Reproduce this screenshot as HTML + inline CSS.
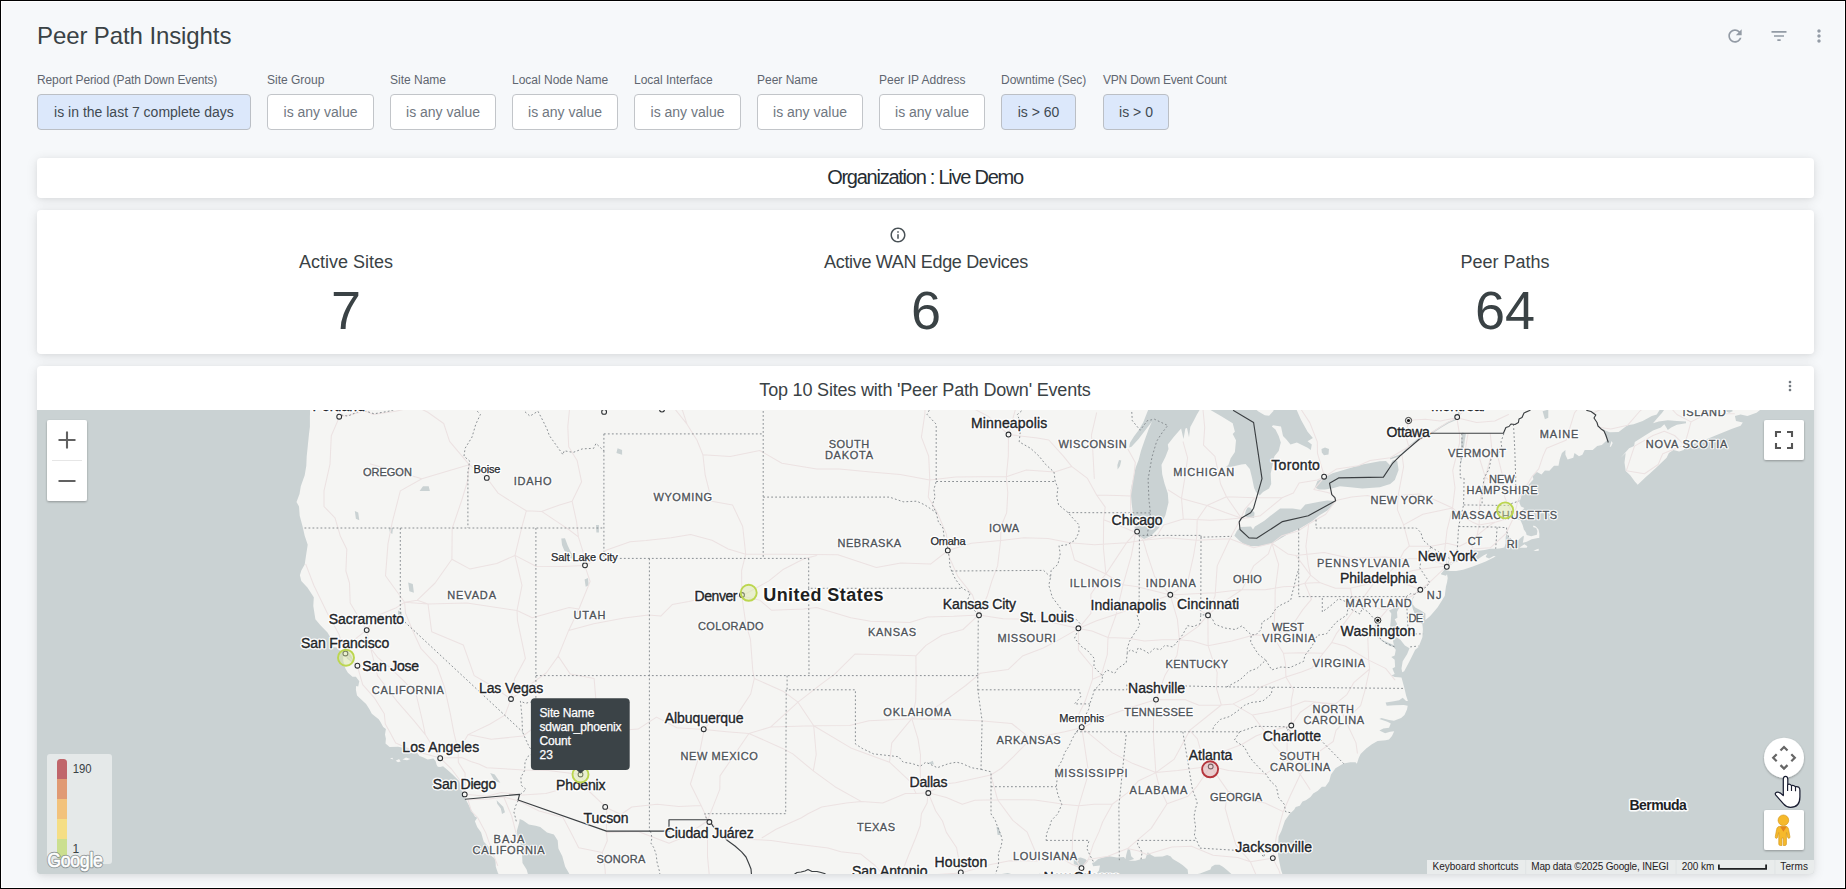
<!DOCTYPE html>
<html lang="en">
<head>
<meta charset="utf-8">
<title>Peer Path Insights</title>
<style>
html,body{margin:0;padding:0;}
html{background:#fff;}
body{width:1846px;height:889px;overflow:hidden;background:#000;font-family:"Liberation Sans",sans-serif;position:relative;}
#frame{position:absolute;left:1px;top:1px;width:1842px;height:885px;border:1px solid #fff;background:#f6f8fa;overflow:hidden;}
#page{position:absolute;left:-2px;top:-2px;width:1846px;height:889px;}
.abs{position:absolute;white-space:nowrap;}
#title{left:37px;top:21px;font-size:24px;line-height:30px;color:#3a4245;letter-spacing:-0.1px;}
.flabel{top:72px;font-size:12px;line-height:16px;color:#5f6670;}
.chip{top:94px;height:34px;line-height:34px;border:1px solid #c2c5c9;border-radius:4px;background:#fff;color:#707781;font-size:14px;text-align:center;box-sizing:content-box;}
.chip.on{background:#dce8fb;border-color:#bbbfc5;color:#414a52;}
.card{position:absolute;left:37px;width:1777px;background:#fff;border-radius:4px;box-shadow:0 2px 12px rgba(0,0,0,.11),0 1px 4px rgba(0,0,0,.04);}
.kl{font-size:18px;line-height:24px;color:#3a4245;text-align:center;width:400px;}
.kv{font-size:54px;line-height:60px;color:#3a4245;text-align:center;width:400px;}
svg{display:block;}
.ic{position:absolute;}
</style>
</head>
<body>
<div id="frame"><div id="page">

<div id="title" class="abs">Peer Path Insights</div>
<svg class="ic" style="left:1725px;top:26px" width="20" height="20" viewBox="0 0 24 24"><path fill="#939ba5" d="M17.65 6.35C16.2 4.9 14.21 4 12 4c-4.42 0-7.99 3.58-7.99 8s3.57 8 7.99 8c3.73 0 6.84-2.55 7.73-6h-2.08c-.82 2.33-3.04 4-5.65 4-3.31 0-6-2.69-6-6s2.69-6 6-6c1.66 0 3.14.69 4.22 1.78L13 11h7V4l-2.35 2.35z"/></svg>
<svg class="ic" style="left:1769px;top:26px" width="20" height="20" viewBox="0 0 24 24"><path fill="#939ba5" d="M10 18h4v-2h-4v2zM3 6v2h18V6H3zm3 7h12v-2H6v2z"/></svg>
<svg class="ic" style="left:1809px;top:26px" width="20" height="20" viewBox="0 0 24 24"><path fill="#939ba5" d="M12 8c1.1 0 2-.9 2-2s-.9-2-2-2-2 .9-2 2 .9 2 2 2zm0 2c-1.100 0-2 .9-2 2s.9 2 2 2 2-.9 2-2-.9-2-2-2zm0 6c-1.100 0-2 .9-2 2s.9 2 2 2 2-.9 2-2-.9-2-2-2z"/></svg>

<!-- filters -->
<div class="abs flabel" style="left:37px;letter-spacing:-0.12px">Report Period (Path Down Events)</div>
<div class="abs chip on" style="left:37px;width:212px">is in the last 7 complete days</div>
<div class="abs flabel" style="left:267px">Site Group</div>
<div class="abs chip" style="left:267px;width:105px">is any value</div>
<div class="abs flabel" style="left:390px">Site Name</div>
<div class="abs chip" style="left:390px;width:104px">is any value</div>
<div class="abs flabel" style="left:512px">Local Node Name</div>
<div class="abs chip" style="left:512px;width:104px">is any value</div>
<div class="abs flabel" style="left:634px">Local Interface</div>
<div class="abs chip" style="left:634px;width:105px">is any value</div>
<div class="abs flabel" style="left:757px">Peer Name</div>
<div class="abs chip" style="left:757px;width:104px">is any value</div>
<div class="abs flabel" style="left:879px">Peer IP Address</div>
<div class="abs chip" style="left:879px;width:104px">is any value</div>
<div class="abs flabel" style="left:1001px">Downtime (Sec)</div>
<div class="abs chip on" style="left:1001px;width:73px">is &gt; 60</div>
<div class="abs flabel" style="left:1103px;letter-spacing:-0.22px">VPN Down Event Count</div>
<div class="abs chip on" style="left:1103px;width:64px">is &gt; 0</div>

<!-- org card -->
<div class="card" style="top:158px;height:40px"></div>
<div id="org" class="abs" style="left:625px;width:600px;top:164px;text-align:center;font-size:20px;line-height:26px;color:#262d33;letter-spacing:-1.25px">Organization : Live Demo</div>

<!-- KPI card -->
<div class="card" style="top:210px;height:144px"></div>
<svg class="ic" style="left:889px;top:226px" width="18" height="18" viewBox="0 0 24 24"><path fill="#4a5257" d="M11 17h2v-6h-2v6zm1-15C6.480 2 2 6.480 2 12s4.480 10 10 10 10-4.480 10-10S17.520 2 12 2zm0 18c-4.410 0-8-3.590-8-8s3.590-8 8-8 8 3.590 8 8-3.590 8-8 8zM11 9h2V7h-2v2z"/></svg>
<div class="abs kl" style="left:146px;top:250px">Active Sites</div>
<div class="abs kv" style="left:146px;top:280px">7</div>
<div class="abs kl" style="left:726px;top:250px;letter-spacing:-0.33px">Active WAN Edge Devices</div>
<div class="abs kv" style="left:726px;top:280px">6</div>
<div class="abs kl" style="left:1305px;top:250px">Peer Paths</div>
<div class="abs kv" style="left:1305px;top:280px">64</div>

<!-- map card -->
<div class="card" style="top:366px;height:508px;overflow:hidden">
<div id="maptitle" class="abs" style="left:588px;width:600px;top:12px;text-align:center;font-size:18px;line-height:24px;color:#3a4245;letter-spacing:-0.19px">Top 10 Sites with 'Peer Path Down' Events</div>
<svg class="ic" style="left:1745px;top:12px" width="16" height="16" viewBox="0 0 24 24"><path fill="#70777e" d="M12 8c1.1 0 2-.9 2-2s-.9-2-2-2-2 .9-2 2 .9 2 2 2zm0 2c-1.100 0-2 .9-2 2s.9 2 2 2 2-.9 2-2-.9-2-2-2zm0 6c-1.100 0-2 .9-2 2s.9 2 2 2 2-.9 2-2-.9-2-2-2z"/></svg>
<div id="map" style="position:absolute;left:0;top:44px;width:1777px;height:464px;background:#cad2d3;overflow:hidden">
<svg width="1777" height="464" viewBox="37 410 1777 464" style="position:absolute;left:0;top:0;font-family:'Liberation Sans',sans-serif">
<rect x="37" y="410" width="1777" height="464" fill="#cad2d3"/>
<path fill="#f5f5f3" d="M308.1 381.6 L308.1 393.2 L310.2 404.7 L309.9 417.7 L309.9 426.8 L309.0 433.9 L307.7 446.7 L306.7 456.3 L306.3 465.8 L304.7 475.2 L300.8 486.2 L299.5 494.0 L296.5 502.1 L299.0 506.5 L299.7 515.7 L302.6 526.5 L304.7 535.7 L307.7 544.8 L305.8 556.9 L304.7 564.4 L301.3 570.4 L299.9 575.2 L301.3 580.9 L307.4 587.4 L313.8 597.2 L313.3 606.1 L315.4 619.3 L320.2 625.1 L327.5 632.4 L330.9 638.2 L333.1 642.6 L331.5 646.9 L336.6 647.5 L338.8 649.8 L342.7 652.1 L343.8 652.1 L344.5 648.3 L347.9 645.4 L349.1 644.0 L347.9 646.9 L347.9 651.2 L351.3 655.5 L353.6 661.3 L352.5 662.7 L346.8 658.4 L345.7 653.2 L343.4 652.7 L343.2 658.4 L343.4 661.3 L345.4 668.4 L347.9 672.7 L352.5 676.7 L355.9 676.7 L359.3 681.3 L358.2 686.4 L356.1 686.1 L355.9 689.8 L357.0 695.4 L366.1 703.9 L369.6 709.5 L371.8 713.7 L378.7 719.3 L380.5 722.1 L383.2 727.1 L385.9 729.1 L385.0 734.6 L385.9 738.8 L385.5 743.5 L389.6 747.1 L398.0 746.8 L407.1 748.4 L412.8 749.8 L416.9 752.6 L419.6 756.1 L423.0 757.2 L427.6 759.4 L433.3 758.6 L435.5 760.8 L436.7 764.9 L437.8 766.8 L440.1 767.1 L443.1 766.3 L448.1 770.4 L452.6 774.5 L459.4 781.3 L462.4 790.8 L463.1 795.7 L465.8 799.5 L470.4 808.3 L474.9 816.4 L477.2 817.7 L474.9 821.2 L477.2 827.1 L481.1 832.4 L483.8 841.7 L490.2 848.4 L490.2 855.0 L495.4 858.9 L495.8 866.8 L498.1 873.4 L509.5 882.5 L523.2 895.6 L545.9 895.6 L539.1 885.1 L528.8 877.3 L526.6 869.4 L522.5 862.9 L522.0 853.6 L520.4 843.1 L517.9 839.1 L516.8 831.1 L519.1 823.1 L519.7 819.1 L523.2 820.4 L528.8 824.4 L535.7 825.8 L540.2 827.1 L547.0 832.4 L553.9 834.6 L557.7 840.4 L558.4 848.4 L562.3 856.3 L565.2 866.8 L569.8 874.7 L575.5 885.1 L582.3 895.6 L741.6 918.9 L923.6 918.9 L937.3 908.5 L960.1 895.6 L966.9 890.4 L973.7 885.1 L982.8 878.6 L995.3 875.2 L1007.8 872.9 L1021.5 877.3 L1030.6 878.6 L1036.3 877.3 L1039.7 873.4 L1048.8 879.9 L1053.4 882.5 L1057.9 886.4 L1069.3 890.4 L1078.4 890.4 L1084.1 886.4 L1092.0 885.1 L1097.7 893.0 L1103.4 893.0 L1101.1 885.1 L1093.2 877.3 L1098.9 870.8 L1100.0 865.5 L1093.2 866.3 L1092.0 862.9 L1094.3 862.3 L1098.2 858.9 L1105.7 856.8 L1109.1 856.3 L1117.1 857.6 L1123.9 857.1 L1125.5 858.9 L1126.2 855.0 L1127.8 848.9 L1130.0 849.7 L1131.2 856.3 L1134.1 858.9 L1128.4 860.8 L1135.3 860.8 L1139.8 859.4 L1145.5 858.4 L1146.7 855.0 L1147.8 852.3 L1151.2 855.0 L1154.6 856.8 L1162.6 856.5 L1167.1 855.0 L1170.5 856.3 L1172.8 858.9 L1179.6 862.9 L1183.1 865.5 L1187.6 869.4 L1188.3 875.2 L1192.2 875.2 L1196.7 874.2 L1200.1 873.4 L1210.4 869.4 L1211.5 866.8 L1214.9 864.7 L1219.5 864.7 L1222.9 866.8 L1226.3 869.4 L1233.1 875.5 L1238.8 885.1 L1246.8 890.4 L1250.2 905.9 L1296.8 905.9 L1290.0 893.0 L1284.3 879.9 L1280.9 869.4 L1278.6 858.1 L1278.2 855.8 L1277.5 848.4 L1278.2 843.1 L1278.6 836.4 L1281.4 831.1 L1283.2 825.8 L1285.0 820.4 L1288.9 815.1 L1290.7 812.9 L1294.1 809.7 L1295.7 807.0 L1299.8 805.7 L1302.5 801.6 L1305.9 800.3 L1310.5 797.0 L1313.2 793.5 L1317.8 790.8 L1321.9 786.7 L1325.3 786.7 L1329.2 781.3 L1331.0 774.5 L1335.5 768.2 L1343.5 763.6 L1350.3 762.2 L1355.5 762.2 L1356.9 763.8 L1358.7 758.1 L1360.6 753.9 L1366.2 748.4 L1371.9 744.3 L1377.6 741.0 L1385.6 740.2 L1389.0 739.6 L1392.0 736.0 L1394.2 731.3 L1390.1 731.8 L1385.1 733.2 L1379.4 730.4 L1383.3 728.5 L1389.0 727.7 L1390.8 723.5 L1387.4 721.8 L1379.4 719.0 L1381.5 717.9 L1389.0 719.9 L1394.0 720.7 L1401.1 717.9 L1404.5 715.1 L1407.0 709.5 L1407.7 705.8 L1403.8 705.0 L1394.7 705.3 L1386.7 705.8 L1385.6 702.5 L1392.4 701.6 L1399.2 700.2 L1402.7 697.7 L1406.1 701.1 L1407.9 701.1 L1406.1 695.4 L1404.5 688.4 L1401.5 677.6 L1394.7 677.0 L1391.3 675.6 L1394.7 674.1 L1392.4 668.4 L1395.1 667.0 L1394.7 659.8 L1391.3 657.0 L1394.7 655.5 L1395.8 649.8 L1393.6 646.9 L1389.0 645.4 L1382.2 641.1 L1376.5 636.8 L1371.9 632.4 L1377.8 623.7 L1378.1 625.1 L1373.1 633.9 L1379.2 638.2 L1384.4 641.1 L1391.3 644.0 L1394.0 645.4 L1392.4 638.2 L1389.7 630.9 L1390.8 620.7 L1391.3 613.4 L1389.0 610.5 L1392.4 609.0 L1399.2 604.6 L1399.7 601.6 L1402.7 603.1 L1399.2 607.5 L1397.0 611.9 L1397.4 617.8 L1394.7 619.3 L1397.0 623.7 L1395.8 629.5 L1399.2 630.9 L1395.8 636.8 L1400.4 639.7 L1404.9 645.4 L1409.5 648.3 L1407.2 654.1 L1402.7 661.3 L1401.5 668.4 L1402.2 672.2 L1404.2 671.3 L1409.5 661.3 L1415.2 649.8 L1418.6 646.9 L1422.4 637.3 L1422.9 629.5 L1422.4 624.2 L1417.4 620.7 L1415.2 614.9 L1412.9 609.0 L1411.3 603.1 L1412.9 597.2 L1417.4 592.8 L1421.3 589.8 L1415.2 594.3 L1412.2 600.2 L1412.9 604.6 L1415.2 607.5 L1420.9 610.5 L1425.4 613.4 L1425.4 619.9 L1430.0 616.3 L1437.5 607.5 L1441.3 601.6 L1444.8 595.7 L1445.9 586.8 L1447.0 582.4 L1447.7 577.9 L1447.0 574.3 L1445.9 575.8 L1441.3 574.6 L1441.1 573.4 L1442.5 571.9 L1444.8 568.9 L1446.3 567.4 L1447.5 564.4 L1449.3 558.4 L1448.2 552.4 L1449.8 558.4 L1448.8 562.0 L1448.6 564.4 L1451.6 564.4 L1454.3 559.9 L1458.4 556.9 L1463.0 554.8 L1466.4 553.3 L1472.1 550.2 L1478.9 550.8 L1484.6 549.9 L1490.3 548.7 L1495.3 548.7 L1499.4 548.4 L1504.4 547.5 L1505.7 543.3 L1505.7 537.2 L1506.4 533.5 L1507.8 536.6 L1510.3 538.7 L1510.7 543.3 L1512.3 544.5 L1514.2 543.3 L1516.9 541.7 L1519.8 538.7 L1523.3 535.7 L1523.9 536.6 L1523.3 540.2 L1522.8 542.7 L1526.7 541.7 L1531.7 539.3 L1538.0 538.1 L1539.2 538.1 L1539.4 534.1 L1538.5 529.5 L1535.8 526.5 L1533.5 525.6 L1533.0 527.1 L1536.2 528.0 L1537.4 531.1 L1536.9 534.7 L1531.2 536.3 L1526.7 535.0 L1526.0 532.6 L1523.9 529.5 L1522.6 524.9 L1520.5 520.3 L1516.4 518.8 L1514.6 517.3 L1516.4 515.1 L1519.2 512.6 L1522.1 510.2 L1524.4 508.0 L1521.0 506.5 L1519.4 502.7 L1521.0 497.1 L1521.7 495.0 L1524.8 490.9 L1527.4 486.2 L1530.1 483.1 L1533.5 479.3 L1532.4 475.9 L1536.9 472.1 L1541.5 474.6 L1544.9 470.5 L1549.4 470.8 L1554.0 465.8 L1558.5 465.8 L1559.7 459.4 L1561.9 453.1 L1565.4 449.9 L1565.4 454.7 L1567.6 459.4 L1573.3 457.8 L1574.5 453.1 L1579.0 456.3 L1582.4 454.7 L1584.7 449.9 L1592.7 449.9 L1597.2 446.1 L1601.8 445.1 L1607.5 439.7 L1605.2 435.5 L1602.9 429.0 L1605.2 430.6 L1609.7 432.3 L1618.6 431.9 L1624.5 427.4 L1627.5 425.2 L1633.6 424.2 L1642.7 420.9 L1651.8 416.1 L1656.8 414.5 L1659.8 409.6 L1663.2 404.7 L1666.6 406.3 L1662.1 412.8 L1656.4 419.3 L1653.0 423.2 L1658.7 421.6 L1667.8 420.3 L1676.9 420.9 L1686.0 421.6 L1686.0 423.2 L1676.9 424.8 L1671.2 427.4 L1667.8 430.0 L1665.9 426.8 L1664.3 424.2 L1660.9 427.4 L1653.0 430.6 L1645.0 435.5 L1634.8 441.9 L1634.1 446.1 L1629.1 448.3 L1623.4 454.7 L1620.7 457.8 L1625.7 453.1 L1624.5 462.6 L1625.7 471.1 L1630.2 475.2 L1634.8 481.5 L1637.7 484.7 L1642.7 480.0 L1646.1 476.8 L1649.6 473.7 L1656.4 467.4 L1659.8 464.2 L1666.6 457.8 L1668.9 453.1 L1673.4 449.9 L1679.1 451.5 L1683.7 449.9 L1686.0 445.1 L1695.1 443.5 L1704.2 440.3 L1715.5 435.5 L1723.5 432.3 L1731.5 429.0 L1740.6 425.8 L1742.8 422.6 L1736.0 420.9 L1734.9 416.1 L1740.6 414.5 L1747.4 416.1 L1756.5 412.8 L1766.7 404.7 L1767.9 391.5 L1765.6 368.3 L172.7 368.3Z"/>
<path fill="#cad2d3" d="M1629.1 368.3 L1660.9 394.8 L1674.6 401.4 L1683.7 406.3 L1692.8 407.9 L1703.0 410.5 L1713.3 411.9 L1721.2 409.6 L1729.2 412.8 L1732.6 411.2 L1730.3 401.4 L1740.6 384.9 L1752.0 368.3Z M1148.9 408.0 L1143.3 422.3 L1138.6 430.2 L1133.9 436.5 L1130.0 442.8 L1129.2 447.5 L1131.5 446.7 L1138.6 438.9 L1144.1 431.8 L1148.9 425.5 L1152.0 421.5 L1148.9 428.6 L1144.9 439.6 L1141.0 450.7 L1138.6 460.1 L1135.5 468.0 L1133.1 479.0 L1130.7 490.0 L1131.5 502.6 L1133.1 515.2 L1134.7 527.8 L1138.6 535.7 L1144.1 538.9 L1151.2 535.7 L1159.1 527.8 L1165.4 515.2 L1168.5 502.6 L1167.8 493.2 L1164.6 483.7 L1162.2 474.3 L1161.5 464.8 L1165.4 457.0 L1168.5 449.1 L1167.8 444.4 L1174.1 436.5 L1181.1 428.6 L1183.5 438.9 L1185.4 428.6 L1187.0 428.0 L1189.0 437.3 L1190.3 427.0 L1193.7 420.7 L1196.9 414.4 L1200.8 408.0Z M1207.1 408.0 L1222.1 416.8 L1232.7 423.2 L1234.9 431.7 L1232.7 433.9 L1236.0 440.3 L1234.9 452.0 L1230.6 458.4 L1228.5 464.8 L1225.3 467.5 L1232.7 466.5 L1241.3 464.6 L1245.6 464.1 L1249.8 469.1 L1252.0 477.7 L1254.1 488.0 L1256.0 492.0 L1259.6 495.5 L1263.0 492.0 L1269.0 488.4 L1271.2 484.1 L1270.7 473.4 L1274.4 456.3 L1278.7 451.0 L1280.8 442.4 L1278.7 436.0 L1275.5 429.6 L1271.8 426.4 L1273.0 425.3 L1281.0 426.4 L1283.0 436.0 L1286.2 439.2 L1290.5 444.5 L1296.9 442.4 L1307.6 447.7 L1310.8 449.9 L1311.8 444.5 L1307.6 441.3 L1312.9 438.1 L1307.6 431.7 L1301.1 420.0 L1295.8 408.0Z M1247.8 507.3 L1250.2 507.7 L1254.5 512.8 L1254.1 518.0 L1247.0 517.6 L1244.7 515.2 L1245.9 510.5Z M1238.8 528.6 L1240.7 527.0 L1251.0 526.6 L1253.0 529.4 L1254.9 526.6 L1264.4 520.7 L1272.2 514.4 L1280.1 508.5 L1292.7 508.5 L1300.6 509.7 L1305.3 504.6 L1319.5 501.8 L1327.4 500.6 L1335.2 501.0 L1333.7 504.2 L1327.4 510.5 L1319.5 515.2 L1311.6 521.5 L1299.8 528.6 L1288.0 534.1 L1280.1 538.8 L1272.2 543.5 L1260.4 545.9 L1251.0 546.3 L1243.9 544.3 L1239.2 540.4 L1234.4 535.7 L1236.8 530.9Z M1314.9 487.4 L1317.4 480.9 L1323.5 477.9 L1332.6 473.3 L1347.8 468.8 L1362.3 464.5 L1379.8 461.2 L1386.0 461.0 L1389.8 464.9 L1393.0 460.0 L1397.3 461.2 L1398.6 469.9 L1394.8 479.9 L1390.2 484.0 L1379.8 487.2 L1362.3 488.5 L1347.8 487.0 L1339.9 486.2 L1332.6 488.2 L1324.9 489.5 L1319.0 489.5Z M561.3 538.6 L565.0 538.2 L567.5 545.0 L571.0 552.5 L574.0 556.0 L572.5 559.0 L568.0 556.0 L564.5 551.0 L562.0 545.0Z M1462.5 432.3 L1461.1 440.3 L1461.1 449.9 L1460.7 459.4 L1460.2 465.8 L1462.0 459.4 L1463.6 449.9 L1464.8 440.3 L1465.9 433.9Z M1080.7 857.6 L1073.8 858.9 L1073.8 864.2 L1079.5 866.0 L1084.1 865.5 L1087.9 861.6 L1085.2 858.9Z M398.0 610.5 L401.9 611.9 L401.4 619.3 L398.0 619.3Z M408.2 582.4 L412.8 583.9 L413.9 592.8 L409.4 591.3Z M490.2 773.1 L494.7 774.5 L500.4 782.7 L494.7 781.3Z M354.8 511.1 L358.2 512.6 L359.3 520.3 L355.9 518.8Z M388.9 528.0 L393.0 528.0 L392.3 534.1 L390.0 532.6Z M423.0 486.2 L428.7 486.2 L429.9 490.9 L419.6 490.9Z M584.6 579.4 L588.0 577.9 L588.7 585.3 L585.7 586.8Z M617.6 448.3 L622.1 449.9 L622.1 454.7 L616.4 453.1Z M596.0 524.9 L598.9 524.9 L598.9 532.6 L596.4 532.6Z M1542.6 411.2 L1548.3 409.6 L1548.3 417.7 L1544.9 419.3Z M1119.0 460.0 L1121.3 460.5 L1120.0 466.0 L1117.6 469.6 L1117.4 465.0Z M997.6 835.1 L996.5 827.1 L998.7 827.1 L1001.0 835.1Z M927.1 763.6 L932.8 760.8 L933.9 764.4Z M1321.5 449.0 L1325.0 447.5 L1329.0 449.0 L1328.5 454.5 L1324.0 455.2 L1321.8 452.5Z M496.6 800.3 L499.6 803.2 L503.2 806.8 L505.0 812.2 L502.0 814.0 L500.8 808.6 L497.2 803.8Z"/>
<path fill="none" stroke="#cad2d3" stroke-width="1.6" stroke-linejoin="round" d="M1390.1 458.8 L1401.5 454.7 L1408.8 446.7 L1420.9 437.1 L1430.4 433.9 L1440.2 427.4 L1448.2 422.6 L1456.1 419.3 L1459.5 411.2 L1465.2 401.4"/>
<path fill="#f5f5f3" d="M1446.3 570.4 L1450.4 571.0 L1456.1 571.0 L1463.0 569.8 L1472.1 566.8 L1480.0 563.8 L1485.7 561.4 L1493.7 557.5 L1495.7 556.3 L1493.7 556.0 L1489.1 558.4 L1485.7 556.9 L1487.3 553.6 L1483.4 555.4 L1477.7 559.3 L1467.5 559.6 L1460.7 560.5 L1457.3 561.4 L1452.7 562.9 L1451.6 564.4 L1449.3 565.0 L1447.0 567.4Z M1519.2 547.8 L1524.4 544.2 L1527.4 546.3 L1526.7 547.8Z M1533.5 550.8 L1536.9 549.3 L1538.7 548.7 L1538.7 550.8 L1535.8 551.1Z M1609.7 446.7 L1611.5 440.9 L1612.7 442.9 L1610.9 446.7Z M1254.0 408.0 L1258.4 411.4 L1264.8 415.2 L1269.1 415.7 L1273.4 410.9 L1274.0 408.0Z M390.0 758.6 L392.3 757.8 L393.4 759.4Z M395.7 760.8 L399.1 758.9 L400.7 761.4 L398.0 762.2Z M402.5 759.4 L406.0 757.5 L410.5 758.9 L407.1 760.3Z"/>
<path fill="none" stroke="#ece2e2" stroke-width="1.05" stroke-linejoin="round" stroke-linecap="round" d="M464.9 794.3 L460.6 781.3 L451.5 769.0 L440.3 758.1 L432.1 745.7 L425.3 734.6 L413.9 720.7 L396.9 701.1 L377.5 675.6 L370.7 648.3 L366.4 630.1 L350.2 603.1 L349.5 583.0 L345.9 571.0 L346.8 549.3 L340.4 536.3 L335.0 517.9 L324.0 506.5 L324.0 490.9 L330.0 464.2 L331.3 435.8 L339.3 417.1 L334.3 398.1 M425.3 734.6 L422.6 721.5 L416.2 694.6 L405.5 682.7 L389.3 667.0 L377.5 657.3 L370.7 648.3 M440.3 758.1 L425.3 753.9 L416.4 751.7 L407.1 747.9 L395.7 742.9 L390.5 733.2 L385.3 724.0 L384.3 713.7 L374.6 698.2 L362.7 684.7 L357.3 665.9 L345.2 653.5 L338.8 633.9 L327.5 613.4 L313.8 585.3 L305.8 564.4 M345.2 653.5 L349.1 644.0 L366.4 630.1 L378.7 614.9 L395.7 608.1 L404.6 602.2 L417.3 600.2 L435.1 583.0 L451.9 559.3 L469.7 568.9 L496.8 563.5 L515.0 555.4 L535.9 566.2 L561.8 566.5 L584.8 565.6 L596.0 559.9 L606.0 550.2 L630.1 541.7 L646.0 540.5 L671.1 537.8 L690.6 534.4 L712.0 540.2 L728.2 549.0 L745.7 554.2 L787.6 554.2 L837.9 554.8 L876.3 567.4 L900.9 562.9 L930.5 564.1 L948.0 550.5 L971.4 543.3 L1000.6 540.5 L1023.8 537.8 L1048.1 538.4 L1069.7 542.7 L1094.3 544.8 L1126.6 542.7 L1143.2 540.2 L1168.3 537.8 L1196.7 540.2 L1229.9 538.7 L1253.6 547.8 L1272.0 543.3 L1287.7 553.9 L1295.7 555.4 L1324.1 552.4 L1351.5 558.4 L1383.3 556.9 L1403.8 558.4 L1419.9 558.7 L1435.6 561.4 L1447.0 565.9 M464.9 794.3 L465.1 773.1 L458.3 762.2 L458.3 751.2 L468.1 734.6 L489.7 724.3 L504.9 715.1 L510.9 699.1 L534.5 681.3 L546.4 672.7 L558.2 656.1 L568.7 630.4 L578.9 609.0 L590.1 581.5 L584.8 565.6 L583.0 551.7 L578.4 536.9 L576.6 521.9 L572.1 501.2 L581.6 481.8 L577.1 460.4 L568.7 446.7 L567.8 426.8 L570.3 401.4 M339.3 417.1 L365.7 411.2 L373.4 414.5 L395.7 411.2 L416.2 406.6 L427.8 412.2 L443.7 423.5 L449.6 441.3 L469.4 464.8 L486.7 477.8 L498.1 493.1 L507.2 499.0 L526.3 510.8 L541.6 511.4 L557.3 521.9 L568.7 529.5 L578.4 536.9 M541.6 511.4 L559.6 504.9 L572.1 501.2 M510.9 699.1 L491.3 685.5 L474.2 675.6 L463.3 644.9 L431.7 631.8 L428.0 604.0 L417.3 600.2 M451.9 559.3 L452.2 528.3 L461.7 500.3 L467.4 481.5 L469.4 464.8 M510.9 699.1 L514.7 678.4 L525.4 658.4 L517.5 620.7 L517.0 610.5 L522.0 585.3 L515.0 555.4 L521.6 528.0 L526.3 510.8 M458.3 751.2 L453.7 731.8 L450.3 713.7 L444.4 686.9 L436.7 665.3 L420.8 648.3 L412.8 630.9 L405.5 613.1 L404.6 602.2 L385.5 575.8 L388.0 543.6 L392.3 522.2 L400.3 490.9 L421.9 478.7 M404.6 602.2 L428.0 604.0 L466.9 603.1 L517.0 610.5 L532.3 617.8 L569.1 607.5 L578.9 609.0 M370.5 463.9 L421.9 478.7 L463.1 466.4 L469.4 464.8 M440.3 758.1 L461.7 757.5 L470.8 761.4 L478.8 764.1 L486.7 767.7 L504.9 768.8 L523.2 770.1 L548.2 770.4 L580.7 774.5 L587.8 790.0 L606.7 807.8 L621.0 814.5 L631.7 807.0 L657.2 804.3 L678.8 806.5 L701.1 805.4 L707.7 820.1 L723.4 833.8 L745.5 839.3 L771.2 840.4 L789.8 843.3 L828.1 848.1 L840.8 851.8 L860.6 853.9 L875.0 865.5 L889.7 882.0 L912.3 878.6 L935.0 874.7 L960.7 873.1 L989.6 864.7 L1009.7 860.8 L1037.0 861.0 L1056.8 855.0 L1071.6 864.2 L1081.3 868.1 L1088.6 859.4 L1108.0 856.3 L1127.5 848.6 L1138.7 851.0 L1146.7 854.4 L1171.7 847.0 L1191.5 846.2 L1213.1 855.2 L1237.7 857.6 L1250.4 861.8 L1272.7 858.1 M464.9 794.3 L486.7 796.2 L501.3 792.4 L522.5 795.1 L545.9 793.5 L565.9 788.1 L587.8 790.0 M468.1 734.6 L491.3 739.3 L522.9 736.0 L535.7 726.5 L561.8 723.5 L590.3 726.3 L611.9 731.0 L638.1 729.1 L656.5 717.1 L676.8 727.7 L704.1 729.6 L726.6 731.8 L748.9 733.5 L770.5 727.1 L813.7 725.7 L849.7 725.4 L869.0 720.7 L911.8 718.7 L946.4 719.3 L982.8 721.0 L1011.7 723.5 L1030.8 738.8 L1064.7 731.8 L1081.8 727.7 L1110.0 714.8 L1133.0 706.7 L1156.2 699.4 L1185.3 699.7 L1199.0 705.3 L1221.3 705.0 L1233.1 703.9 L1252.5 715.1 L1271.8 711.5 L1290.0 706.7 L1305.0 701.1 L1315.3 701.9 L1333.2 705.3 L1341.4 710.1 L1346.9 723.5 L1356.0 742.9 L1357.4 753.1 M580.7 774.5 L580.0 751.2 L588.0 738.8 L590.3 726.3 L596.0 701.1 L594.1 678.4 L570.3 674.1 L558.2 656.1 M701.1 805.4 L690.4 784.0 L698.6 757.8 L704.1 729.6 L713.2 717.9 L720.2 712.6 L736.6 715.4 L750.7 694.0 L754.3 678.4 L752.8 670.7 L750.5 639.7 L745.7 622.8 L741.8 596.0 L741.6 570.7 L745.7 554.2 L742.7 526.5 L732.5 504.9 L711.8 501.2 L705.2 475.2 L702.9 454.7 L697.0 440.3 L687.0 424.2 L682.4 410.2 L668.8 401.4 M568.7 630.4 L593.7 623.7 L624.2 618.1 L648.3 614.9 L660.8 616.1 L672.2 604.6 L688.8 601.6 L700.6 598.7 L717.3 599.0 L730.2 596.6 L741.8 596.0 L759.8 600.2 L771.4 610.2 L803.7 609.0 L816.5 607.5 L850.8 617.8 L870.6 621.3 L909.8 622.5 L927.5 616.9 L953.7 616.3 L978.7 614.9 L1003.3 618.7 L1029.9 619.3 L1057.9 623.7 L1078.4 628.6 L1096.6 620.7 L1116.2 614.3 L1142.1 604.6 L1170.3 595.1 L1199.0 593.4 L1215.1 592.8 L1242.2 589.5 L1265.0 589.8 L1283.2 586.8 L1294.1 586.2 L1304.8 583.3 L1319.6 582.4 L1335.5 588.3 L1350.5 588.3 L1351.9 596.6 L1362.4 599.0 L1369.4 605.5 L1381.0 609.0 L1387.6 609.3 M741.8 596.0 L768.9 580.9 L782.6 569.8 L804.0 558.7 L816.7 555.4 M668.8 401.4 L687.0 424.2 M702.9 454.7 L730.2 456.6 L759.8 450.5 L781.9 463.2 L816.7 468.9 L839.5 468.9 L870.6 472.1 L900.2 474.6 L929.8 480.0 L955.5 477.1 L981.4 476.8 L1006.3 476.8 L1026.3 469.9 L1054.7 472.1 L1071.6 466.4 L1087.5 478.4 L1096.6 495.0 L1105.2 507.1 L1103.6 519.7 L1121.6 526.5 L1135.7 532.6 M1272.0 543.3 L1282.0 535.7 L1298.0 531.1 L1308.7 524.0 L1325.7 514.2 L1336.0 500.6 L1351.5 497.1 L1367.4 495.6 L1381.0 498.7 L1398.1 495.6 L1419.0 494.0 L1433.4 499.3 L1452.5 508.0 L1460.7 515.7 L1472.1 521.9 L1479.1 524.9 L1496.0 521.9 L1513.9 517.0 M946.4 394.8 L988.0 416.1 L1008.5 434.5 L1037.4 438.0 L1048.8 440.0 L1063.6 456.3 L1071.6 466.4 M1096.6 495.0 L1117.1 495.6 L1130.5 495.9 L1130.7 510.2 L1135.7 532.6 L1143.2 540.2 L1156.9 535.7 L1163.7 524.9 L1183.3 519.1 L1210.4 520.3 L1225.2 519.4 L1241.1 517.9 L1244.5 509.6 L1254.7 497.8 M875.9 895.6 L889.7 882.0 L903.2 869.4 L906.8 859.7 L915.7 837.7 L920.2 825.8 L921.4 813.7 L927.1 803.0 L928.2 792.7 L920.7 781.3 L920.2 769.0 L920.5 754.8 L918.0 738.8 L911.8 718.7 L915.7 701.1 L916.1 681.3 L915.9 655.8 L925.9 645.4 L941.9 635.3 L963.0 629.5 L978.7 614.9 L987.4 595.7 L991.9 580.9 L997.6 565.9 L1000.6 540.5 L1001.0 526.5 L1006.7 512.6 L1007.8 492.5 L1006.3 476.8 L1008.3 456.3 L1008.5 434.5 L1015.8 407.9 L1021.5 394.8 M978.7 614.9 L972.6 595.1 L957.8 576.4 L949.8 558.4 L948.0 550.5 L946.4 534.1 L937.3 512.6 L928.2 497.1 L929.8 480.0 L928.7 456.3 L921.4 437.1 L924.8 414.5 L925.9 391.5 M762.1 837.7 L776.0 829.2 L801.5 817.7 L808.0 813.7 L821.7 807.0 L846.3 803.0 L861.5 801.6 L882.7 803.0 L905.4 793.5 L916.1 793.5 L928.2 792.7 L946.4 797.6 L962.3 804.3 L974.8 800.3 L997.6 799.7 L1022.9 799.7 L1034.7 800.0 L1055.6 803.0 L1062.9 804.3 L1078.8 805.7 L1094.3 804.3 L1112.5 804.0 L1128.4 792.2 L1138.2 781.0 L1155.8 772.6 L1177.8 770.4 L1210.6 766.3 L1228.6 770.4 L1253.6 773.1 L1265.7 773.9 L1280.9 763.6 L1287.1 759.4 L1305.9 753.9 L1316.0 753.9 M928.2 792.7 L944.1 784.0 L955.5 782.7 L990.8 775.0 L1001.0 768.5 L1013.5 756.7 L1030.8 738.8 M960.7 873.1 L958.7 858.9 L956.6 847.8 L946.4 832.4 L942.5 821.0 L935.7 811.0 L928.2 792.7 M889.5 762.2 L891.8 742.9 L902.0 730.4 L911.8 718.7 L930.5 710.9 L946.6 699.7 L965.7 685.5 L980.3 673.3 L1008.1 669.6 L1022.4 656.1 L1042.7 648.3 L1056.5 641.1 L1078.4 628.6 M1081.3 868.1 L1072.2 853.6 L1072.7 833.8 L1078.8 805.7 L1088.6 773.1 L1087.5 765.5 L1084.1 742.9 L1081.8 727.7 L1078.4 715.1 L1085.2 701.1 L1092.5 679.3 L1092.5 667.0 L1078.4 649.8 L1078.4 628.6 L1090.9 613.4 L1090.9 594.3 L1097.7 583.9 L1105.9 574.0 L1118.2 555.4 L1126.6 542.7 L1135.7 532.6 M1092.5 679.3 L1101.1 675.6 L1107.3 654.7 L1108.0 637.6 L1116.2 614.3 L1123.0 584.8 L1131.4 555.4 L1135.7 532.6 M1127.5 848.6 L1151.2 828.4 L1167.1 803.8 L1159.2 786.7 L1155.8 772.6 L1154.6 753.9 L1153.5 738.8 L1153.5 715.1 L1156.2 699.4 L1164.9 675.6 L1176.9 655.5 L1179.4 639.7 L1177.4 619.3 L1170.3 595.1 L1154.6 576.4 L1146.7 552.4 L1143.2 540.2 M1261.6 887.8 L1250.4 861.8 L1235.9 844.9 L1230.8 828.4 L1225.2 808.3 L1227.9 791.1 L1210.6 766.3 L1201.3 752.6 L1197.4 738.8 L1189.7 730.4 L1207.0 716.5 L1221.3 705.0 L1216.5 688.4 L1217.2 672.7 L1212.6 659.3 L1208.1 645.7 L1207.9 614.9 L1215.1 595.7 L1217.2 565.9 L1229.9 538.7 L1241.1 517.9 L1226.5 496.8 L1220.6 484.0 L1214.9 456.3 L1203.5 445.1 L1204.7 427.4 L1202.9 408.6 M1167.1 803.8 L1188.1 796.2 L1196.7 786.7 L1210.6 766.3 L1224.0 751.2 L1242.2 744.3 L1255.9 736.0 L1267.3 731.8 L1291.4 725.4 L1300.3 712.3 L1315.3 701.9 L1335.5 703.9 L1346.9 694.6 L1353.7 682.7 L1369.7 669.0 M1287.7 895.6 L1278.6 869.4 L1272.7 858.1 L1276.4 836.4 L1283.2 811.6 L1290.0 796.2 L1300.3 774.5 L1316.0 753.9 L1333.2 741.5 L1336.0 730.4 L1348.0 717.9 L1360.6 705.6 L1365.1 689.8 L1369.7 669.0 L1368.7 660.1 L1367.8 638.2 L1377.8 620.7 L1387.6 609.3 L1402.7 600.2 L1411.8 596.0 L1420.4 589.8 L1430.0 581.8 L1447.0 565.9 L1457.5 556.9 L1471.6 549.0 L1490.3 547.8 L1506.0 533.5 L1513.9 517.0 L1517.6 501.8 L1520.8 495.0 L1532.1 476.5 L1538.7 468.9 L1543.1 455.9 L1546.5 448.3 L1566.0 440.3 L1574.5 412.8 L1587.2 397.5 M1233.1 703.9 L1253.6 694.0 L1260.7 686.9 L1285.9 677.0 L1301.4 671.9 L1311.9 667.9 L1323.2 653.2 L1331.7 642.6 L1336.2 633.9 L1352.4 612.2 L1362.4 599.0 L1374.2 582.4 L1381.5 580.3 L1397.0 564.4 L1404.2 550.8 L1409.3 546.0 L1403.6 524.9 L1397.4 509.6 L1398.1 495.6 L1403.6 466.7 L1402.0 454.7 M1287.1 759.4 L1287.1 733.8 L1291.4 725.4 L1291.2 701.1 L1293.4 689.8 L1285.9 677.0 L1285.5 664.1 L1283.4 653.2 L1273.4 636.8 L1274.1 623.7 L1275.0 609.9 L1275.2 589.8 L1278.6 564.4 L1275.9 556.0 L1272.0 543.3 M1273.4 636.8 L1293.4 623.7 L1302.8 609.6 L1311.4 599.3 L1304.8 583.3 L1310.5 575.2 L1308.2 564.4 L1305.9 546.3 L1308.7 524.0 M1078.4 628.6 L1092.0 630.9 L1108.0 637.6 L1128.4 638.2 L1144.4 641.1 L1162.6 639.7 L1179.4 639.7 L1192.2 641.1 L1208.1 645.7 L1232.0 641.1 L1254.7 634.7 L1273.4 636.8 M1283.4 653.2 L1300.3 652.7 L1323.2 653.2 M1331.7 642.6 L1345.1 646.0 L1368.7 660.1 L1385.6 668.4 L1394.9 679.8 M1179.4 639.7 L1197.9 626.6 L1207.9 614.9 L1224.0 601.6 L1242.2 589.5 L1253.6 565.9 L1268.4 553.9 L1272.0 543.3 M1295.7 555.4 L1303.7 565.9 L1310.5 575.2 L1319.6 582.4 M1350.5 588.3 L1374.2 582.4 M1381.5 580.3 L1401.5 582.4 L1420.4 589.8 M1447.0 565.9 L1444.8 549.3 L1447.0 530.2 L1452.5 508.0 L1455.0 487.8 L1452.7 470.5 L1459.5 443.5 L1459.5 433.9 L1456.8 417.7 M1503.2 490.9 L1485.3 477.1 L1479.3 457.5 L1465.2 450.5 L1468.0 433.9 M1471.6 549.0 L1477.1 535.3 L1479.1 524.9 L1479.8 501.8 L1485.3 477.1 L1492.1 452.4 L1490.3 433.9 M1513.9 517.0 L1504.8 497.5 L1503.2 490.9 L1502.8 476.8 L1497.8 456.3 L1492.1 452.4 M1403.6 524.9 L1422.9 514.2 L1452.5 508.0 M1409.3 546.0 L1431.1 546.3 L1447.0 543.3 L1459.5 546.3 L1468.6 541.7 L1477.1 535.3 L1490.3 524.9 L1496.0 521.9 M1381.5 580.3 L1412.9 570.4 L1433.4 567.4 L1447.0 565.9 M1170.3 595.1 L1187.6 582.4 L1193.5 556.0 L1196.7 537.2 L1197.2 519.7 L1207.0 505.5 L1226.5 496.8 L1254.7 497.8 M1168.3 490.0 L1181.5 498.4 L1207.0 505.5 L1225.2 512.6 L1241.1 517.9 M1069.7 542.7 L1074.5 559.9 L1092.3 567.7 L1105.9 574.0 L1123.0 584.8 L1137.6 586.8 L1170.3 595.1 L1192.2 606.1 L1207.9 614.9 M1130.5 495.9 L1134.1 473.7 L1135.3 462.6 L1128.0 449.3 M1103.6 519.7 L1103.4 547.8 L1105.9 574.0 M1094.3 478.4 L1092.7 449.3 L1091.4 435.2 L1096.6 412.8 M1183.3 519.1 L1181.5 498.4 L1185.3 475.2 L1187.6 457.8 L1183.1 441.9 M1227.9 791.1 L1244.5 798.9 L1265.0 803.0 L1283.2 811.6 M1252.5 715.1 L1265.0 731.8 L1274.1 745.7 L1287.1 759.4 L1300.3 774.5 L1310.0 789.4 M1081.3 868.1 L1088.6 858.9 L1093.2 844.4 L1099.1 831.6 L1102.7 821.8 L1112.5 804.0 M1155.8 772.6 L1174.0 759.4 L1180.8 747.1 L1189.7 730.4 M1037.0 861.0 L1035.6 852.3 L1027.2 832.2 L1012.8 820.4 L997.6 799.7 L990.8 775.0 M813.3 770.9 L816.2 754.5 L813.7 725.7 M889.7 882.0 L900.9 895.6 M1081.8 727.7 L1112.1 752.6 L1133.0 763.6 L1155.8 772.6 M916.1 793.5 L910.0 781.3 L889.5 762.2 L850.8 747.9 L813.7 725.7 L798.0 702.2 L783.0 691.2 L754.3 678.4 M861.5 801.6 L834.9 786.7 L813.3 770.9 L792.8 753.9 L782.6 748.4 L748.9 733.5 M707.7 820.1 L719.8 789.4 L720.0 775.9 L748.9 733.5 M770.5 727.1 L798.0 702.2 L821.2 684.1 L834.4 674.4 L854.9 654.1 L915.9 655.8 M1242.2 518.8 L1260.4 515.7 L1282.0 497.8 L1293.4 493.1 L1299.1 483.1 L1317.3 480.0 L1324.6 476.8 L1336.7 468.9 L1358.3 465.8 L1370.1 460.4 L1390.1 457.8 L1408.8 446.7 L1430.4 433.2 L1447.0 422.6 L1456.8 417.7 L1469.8 404.7 M1408.3 420.3 L1425.4 419.3 L1440.2 420.9 L1456.8 417.7 M1408.3 420.3 L1406.1 437.1 L1408.8 446.7 M1324.6 476.8 L1320.7 464.2 L1317.5 453.4 L1317.3 441.9 L1309.8 422.6 L1296.8 403.0 M1456.8 417.7 L1476.6 422.6 L1494.8 420.9 L1508.5 414.5 M1324.6 476.8 L1313.9 489.4 L1327.6 492.5 L1332.1 494.0 L1336.0 500.6 M1254.7 497.8 L1282.0 497.8 M1599.9 427.4 L1610.9 429.0 L1627.7 425.2 L1640.4 410.5 L1656.8 398.4 M1593.8 412.8 L1614.5 402.7 L1656.8 398.4 M1626.3 470.8 L1634.5 446.1 L1653.0 435.5 L1664.3 431.3 L1674.6 435.5 L1684.4 445.1 L1688.2 432.3 L1691.0 421.9 L1676.9 414.5 L1670.0 407.0 M1691.0 421.9 L1705.3 414.5 L1720.3 413.8 L1734.4 413.8 M1626.3 470.8 L1644.5 473.7 L1658.2 464.5 L1662.7 453.7 L1684.4 445.1 M467.9 799.7 L489.0 798.9 L503.8 797.0 L519.1 801.1 L539.1 811.0 L563.0 817.5 L570.9 832.4 L578.7 847.8 L602.3 852.6 L607.3 840.7 L606.4 832.4 L606.7 807.8 M602.3 852.6 L605.1 869.4 L606.2 890.4 M467.9 799.7 L471.3 811.0 L477.6 817.5 L485.6 832.4 L492.4 852.1 L497.7 865.5 M503.8 797.0 L511.8 816.4 L517.7 839.6 M707.7 820.7 L707.5 837.7 L707.5 856.3 L709.7 879.9 M707.7 820.7 L682.4 837.7 L669.0 843.3 L638.1 831.6 L606.4 832.4"/>
<path fill="none" stroke="#7f8489" stroke-width="0.9" stroke-dasharray="1.8 2.2" stroke-linejoin="round" d="M309.2 393.2 L327.5 396.5 L336.6 406.3 L337.7 414.5 L347.9 416.1 L359.3 411.2 L366.1 411.2 L374.1 413.8 L388.9 411.2 L400.3 407.9 L411.6 404.0 L423.5 401.4 L470.4 401.4 M470.4 401.4 L474.2 407.9 L480.4 414.5 L475.8 424.2 L472.0 437.1 L465.1 448.3 L464.0 456.3 L469.7 461.0 L467.9 471.5 L467.9 528.0 M304.5 528.0 L603.9 528.0 M400.3 528.0 L400.3 617.8 L522.5 731.8 M535.9 528.0 L535.9 698.2 L534.5 701.1 L525.4 703.3 L520.4 701.1 L521.3 709.5 L522.0 717.9 L522.5 731.8 L526.1 740.2 L529.3 747.1 L533.4 752.6 L527.7 756.7 L525.0 762.2 L524.7 770.4 L520.9 777.2 L521.3 785.4 L526.1 789.4 L520.4 794.3 M535.9 675.6 L977.8 675.6 M649.4 558.4 L649.4 831.6 M603.9 433.9 L763.2 433.9 M603.9 558.4 L808.7 558.4 M603.9 450.8 L603.9 558.4 M763.2 403.0 L763.2 558.4 M603.9 433.9 L603.9 450.8 L596.0 443.5 L593.7 448.3 L582.3 448.9 L573.2 452.4 L564.1 450.8 L563.0 454.7 L558.4 448.3 L552.7 440.3 L549.3 435.5 L547.0 429.0 L541.4 417.7 L537.9 411.2 L530.0 416.1 L524.3 411.2 L527.7 403.0 M808.7 558.4 L808.7 588.3 L962.3 588.3 M808.7 588.3 L809.0 675.6 M763.2 497.1 L889.5 497.1 L903.2 501.8 L916.8 501.2 L924.8 504.9 L936.2 512.6 M932.8 403.0 L927.1 414.5 L936.2 424.2 L936.2 481.5 L933.9 489.4 L935.0 497.1 L932.3 504.9 L936.2 512.6 M936.2 481.5 L1055.2 481.5 M936.2 512.6 L938.4 521.9 L943.0 528.0 L944.1 537.2 L946.9 543.3 L948.0 550.5 L949.4 558.4 L949.8 565.9 L951.6 571.0 L955.5 579.4 L962.3 588.3 L970.3 592.8 L966.9 601.6 L971.4 607.5 L978.3 614.3 L977.8 675.6 L977.8 689.8 L982.1 720.7 L981.0 769.3 M951.6 571.0 L1043.6 570.4 L1050.6 577.0 M1030.6 403.0 L1017.4 414.5 L1021.0 424.2 L1019.2 441.9 L1030.6 448.3 L1039.2 456.3 L1045.4 464.2 L1054.0 472.1 L1055.2 481.5 L1057.9 487.8 L1056.8 497.1 L1058.6 504.9 L1068.1 512.6 L1073.4 518.8 L1079.1 524.9 L1078.8 532.6 L1075.0 540.2 L1067.0 544.8 L1059.0 545.7 L1060.2 553.9 L1057.9 564.4 L1051.1 570.4 L1050.6 577.0 L1048.8 585.3 L1050.4 590.4 L1052.2 597.2 L1059.0 606.1 L1067.0 617.8 L1070.4 621.3 L1076.1 619.3 L1080.2 623.7 L1078.8 628.6 L1074.5 638.2 L1081.8 646.9 L1086.8 649.8 L1094.3 658.4 L1093.9 667.0 L1102.3 675.6 L1102.3 681.3 L1097.7 686.9 L1094.3 689.8 L1093.2 694.0 L1089.8 703.9 L1088.6 709.5 L1084.1 717.9 L1080.7 727.7 L1076.1 731.8 L1071.6 740.2 L1069.3 745.7 L1064.7 752.6 L1062.5 759.4 L1057.9 767.7 L1057.5 775.9 L1056.3 786.7 L1057.9 794.9 L1061.8 804.3 L1057.9 813.7 L1051.5 820.4 L1049.9 825.8 L1046.5 833.8 L1046.1 840.4 M1046.1 840.4 L1089.1 840.4 L1086.8 848.4 L1089.8 855.0 L1093.6 862.1 M977.8 689.8 L1079.5 689.8 L1080.7 696.8 L1074.5 703.9 L1089.8 703.9 M991.0 786.7 L1056.3 786.7 M981.0 769.3 L991.0 771.8 L991.0 814.0 L995.3 820.4 L997.6 827.1 L1001.0 835.1 L1002.2 840.4 L1001.0 847.0 L998.3 853.6 L998.7 860.2 L998.3 865.5 L995.3 874.7 M787.1 675.6 L787.1 689.8 L855.4 689.8 L855.4 744.0 L862.2 748.4 L873.6 753.9 L886.1 755.3 L898.6 756.7 L903.2 762.2 L912.3 763.6 L920.2 766.3 L925.9 762.2 L937.3 767.7 L948.7 763.6 L956.6 762.2 L962.3 763.6 L971.4 767.7 L981.0 769.3 M786.2 689.8 L785.7 813.7 L704.7 813.7 L706.8 819.6 M1068.4 512.6 L1150.4 512.9 M1131.5 408.0 L1132.3 420.7 L1136.3 425.5 L1140.2 430.2 L1147.3 420.7 L1154.4 419.2 L1167.8 425.5 L1162.2 432.6 L1156.7 441.2 L1152.0 457.0 L1148.1 479.0 L1148.9 499.5 L1150.4 512.9 L1147.3 535.4 M1139.4 535.4 L1139.1 607.5 L1137.1 614.9 L1139.8 625.1 L1134.1 633.9 L1129.6 641.1 L1127.3 648.3 L1127.3 652.7 M1138.6 535.4 L1201.6 535.4 L1201.0 535.3 L1201.0 537.2 L1232.0 536.3 M1201.0 537.2 L1200.8 614.9 M1102.3 675.6 L1106.8 669.9 L1114.8 673.3 L1117.8 668.4 L1126.2 662.7 L1127.3 652.7 L1130.7 649.8 L1136.4 652.7 L1138.2 647.8 L1145.5 651.2 L1148.9 653.5 L1154.6 648.3 L1160.3 649.8 L1164.9 645.4 L1172.8 646.9 L1179.4 639.4 L1183.1 633.9 L1187.6 625.7 L1193.3 626.6 L1200.1 623.7 L1200.8 614.9 L1208.1 614.9 L1212.6 619.3 L1214.9 624.2 L1224.7 628.0 L1235.4 629.5 L1242.2 625.7 L1246.8 630.9 L1251.3 634.7 L1255.9 634.7 L1261.1 629.5 L1262.0 622.2 L1270.0 617.8 L1275.0 609.9 L1278.6 606.1 L1290.7 600.2 L1292.3 592.8 L1294.1 586.2 L1296.4 576.4 L1298.7 569.2 M1298.7 528.6 L1298.7 596.6 M1298.7 596.6 L1406.3 596.6 M1316.0 519.7 L1316.0 528.0 L1416.3 528.0 L1420.9 532.6 L1423.1 540.2 L1431.1 547.2 M1431.1 547.2 L1425.4 555.4 L1421.3 559.3 L1419.7 567.7 L1422.4 571.9 L1425.4 576.4 L1429.5 582.4 L1426.5 586.8 L1421.3 589.8 L1414.7 594.3 M1431.1 547.2 L1449.3 558.4 M1406.3 596.6 L1408.3 633.9 L1423.1 633.9 M1406.3 596.6 L1410.6 593.7 L1414.7 594.3 M1094.3 689.8 L1126.9 689.8 L1126.9 684.7 L1226.8 686.9 L1272.3 687.2 L1404.5 688.4 M1226.8 686.9 L1240.0 679.8 L1249.1 671.3 L1257.0 668.4 L1265.7 660.1 L1258.2 654.1 L1253.6 646.9 L1250.6 642.0 L1251.3 634.7 M1265.7 660.1 L1271.8 669.9 L1280.9 667.0 L1290.0 667.6 L1303.7 661.3 L1304.8 655.5 L1311.6 646.9 L1317.3 635.3 L1326.4 633.9 L1336.2 622.2 L1346.9 614.9 L1348.0 607.5 L1359.9 614.0 L1362.4 608.4 M1362.4 608.4 L1359.4 603.1 L1356.0 599.6 L1351.5 597.2 L1345.8 601.6 L1338.7 598.7 L1332.1 604.6 L1322.3 611.9 L1322.3 596.6 M1362.4 608.4 L1368.1 611.9 L1373.1 617.8 L1377.8 620.7 L1375.3 628.0 L1371.9 635.3 L1378.8 636.8 L1384.4 642.6 L1394.7 646.9 M1410.2 646.9 L1418.6 646.0 M1272.3 687.2 L1271.4 694.0 L1262.7 701.1 L1251.3 702.5 L1244.5 705.3 L1237.7 710.9 L1229.7 716.5 L1220.6 719.3 L1213.8 726.3 L1212.2 731.8 M1076.1 731.8 L1239.7 731.8 M1123.9 731.8 L1126.2 734.6 L1118.9 805.7 L1119.3 860.2 M1182.8 731.8 L1192.6 790.3 L1195.6 797.6 L1197.2 803.0 L1195.6 808.3 L1194.0 816.4 L1195.6 827.1 L1194.4 835.1 L1196.7 840.4 L1199.9 848.1 M1141.0 859.4 L1142.1 852.3 L1137.6 844.4 L1137.6 840.4 L1196.7 840.4 M1199.9 848.1 L1260.0 851.8 L1263.8 857.3 L1265.0 851.0 L1266.1 846.2 L1277.5 848.1 M1239.7 731.8 L1234.3 740.2 L1244.5 747.1 L1247.9 753.9 L1252.5 760.8 L1261.6 770.4 L1265.7 773.9 L1270.7 781.3 L1276.4 786.7 L1278.6 797.6 L1284.3 804.3 L1285.5 811.6 L1291.2 812.9 M1239.7 731.8 L1255.9 726.3 L1286.8 726.8 L1286.6 730.4 L1289.3 729.1 L1292.3 736.8 L1317.8 737.1 L1343.7 763.6 M1461.8 433.5 L1462.3 449.9 L1460.2 465.8 L1460.2 477.8 L1464.1 478.4 L1463.6 504.9 L1458.6 526.5 L1457.3 549.3 L1453.2 555.4 L1454.8 559.0 M1503.9 433.5 L1501.0 441.9 L1502.1 449.9 L1496.0 454.7 L1491.4 456.9 L1489.1 468.9 L1483.9 478.4 L1482.8 489.4 L1482.1 497.1 L1482.1 505.5 M1513.5 424.2 L1514.8 449.9 L1515.7 478.4 L1515.7 486.2 L1519.4 490.9 L1522.1 495.0 M1463.6 504.9 L1508.5 505.5 L1511.9 503.4 L1519.4 500.9 M1458.6 526.5 L1497.1 527.1 L1506.6 527.7 L1506.6 531.1 L1508.5 536.6 L1512.3 540.2 L1512.3 543.3 M1497.1 527.4 L1495.7 548.7 M650.5 831.1 L652.0 838.0 L650.8 843.0 L654.0 848.0 L656.2 854.7 L657.0 862.0 L659.6 871.8 L660.0 876.0 M518.1 800.6 L516.0 805.0 L513.9 812.0 L515.5 818.0 L516.7 823.4"/>
<path fill="none" stroke="#3b3f42" stroke-width="1.15" stroke-linejoin="round" d="M1233.1 410.3 L1253.6 422.5 L1262.0 478.6 L1253.6 508.2 L1250.6 512.8 L1241.5 518.1 L1239.2 521.9 L1240.0 529.5 L1249.0 537.9 L1256.7 538.3 L1282.5 521.6 L1308.3 515.8 L1335.6 500.7 L1334.9 497.6 L1331.8 494.6 L1329.5 483.2 L1338.6 477.9 L1383.4 477.1 L1392.3 463.7 L1400.0 455.9 L1419.8 438.7 L1431.0 433.2 L1503.4 433.2 L1505.9 427.5 L1509.0 426.5 L1511.0 424.0 L1515.0 424.5 L1518.4 422.5 L1519.0 419.0 L1522.0 417.5 L1524.0 413.0 L1529.6 410.5 L1532.0 408.0 M1585.0 408.0 L1587.0 410.5 L1591.0 411.5 L1595.8 415.0 L1594.0 418.0 L1597.0 422.5 L1598.0 426.0 L1600.8 428.7 L1604.0 431.0 L1605.8 435.0 L1608.3 442.5 M793.5 875.0 L797.0 872.5 L801.0 872.0 L805.0 871.0 L808.0 869.5 L812.0 871.5 L817.0 871.5 L821.0 872.5 L824.5 873.5 L827.0 875.5 M464.9 799.2 L519.6 794.4 L518.1 800.0 L606.4 831.1 L669.0 831.1 L669.0 819.7 L708.9 819.7 L713.1 826.3 L720.0 833.0 L727.4 840.5 L735.0 846.0 L741.6 851.9 L746.0 857.0 L748.7 863.3 L751.0 869.0 L751.6 876.0"/>
<circle cx="339.2" cy="416.7" r="2.4" fill="#f7f7f5" stroke="#2b2e31" stroke-width="1.05"/>
<circle cx="366.7" cy="630.1" r="2.4" fill="#f7f7f5" stroke="#2b2e31" stroke-width="1.05"/>
<circle cx="345.4" cy="653.5" r="2.4" fill="#f7f7f5" stroke="#2b2e31" stroke-width="1.05"/>
<circle cx="357.4" cy="665.7" r="2.4" fill="#f7f7f5" stroke="#2b2e31" stroke-width="1.05"/>
<circle cx="440.2" cy="758.2" r="2.4" fill="#f7f7f5" stroke="#2b2e31" stroke-width="1.05"/>
<circle cx="464.7" cy="794.4" r="2.4" fill="#f7f7f5" stroke="#2b2e31" stroke-width="1.05"/>
<circle cx="511.0" cy="699.0" r="2.4" fill="#f7f7f5" stroke="#2b2e31" stroke-width="1.05"/>
<circle cx="580.5" cy="774.5" r="2.4" fill="#f7f7f5" stroke="#2b2e31" stroke-width="1.05"/>
<circle cx="605.2" cy="806.9" r="2.4" fill="#f7f7f5" stroke="#2b2e31" stroke-width="1.05"/>
<circle cx="703.7" cy="729.2" r="2.4" fill="#f7f7f5" stroke="#2b2e31" stroke-width="1.05"/>
<circle cx="709.4" cy="822.0" r="2.4" fill="#f7f7f5" stroke="#2b2e31" stroke-width="1.05"/>
<circle cx="742.0" cy="595.0" r="2.4" fill="#f7f7f5" stroke="#2b2e31" stroke-width="1.05"/>
<circle cx="486.8" cy="477.9" r="2.4" fill="#f7f7f5" stroke="#2b2e31" stroke-width="1.05"/>
<circle cx="585.0" cy="565.3" r="2.4" fill="#f7f7f5" stroke="#2b2e31" stroke-width="1.05"/>
<circle cx="1008.5" cy="434.5" r="2.4" fill="#f7f7f5" stroke="#2b2e31" stroke-width="1.05"/>
<circle cx="947.8" cy="550.4" r="2.4" fill="#f7f7f5" stroke="#2b2e31" stroke-width="1.05"/>
<circle cx="1137.1" cy="531.6" r="2.4" fill="#f7f7f5" stroke="#2b2e31" stroke-width="1.05"/>
<circle cx="979.0" cy="615.3" r="2.4" fill="#f7f7f5" stroke="#2b2e31" stroke-width="1.05"/>
<circle cx="1078.4" cy="628.3" r="2.4" fill="#f7f7f5" stroke="#2b2e31" stroke-width="1.05"/>
<circle cx="1170.3" cy="594.8" r="2.4" fill="#f7f7f5" stroke="#2b2e31" stroke-width="1.05"/>
<circle cx="1208.0" cy="615.3" r="2.4" fill="#f7f7f5" stroke="#2b2e31" stroke-width="1.05"/>
<circle cx="1324.1" cy="476.7" r="2.4" fill="#f7f7f5" stroke="#2b2e31" stroke-width="1.05"/>
<circle cx="1408.5" cy="420.5" r="3.1" fill="#f7f7f5" stroke="#222" stroke-width="0.9"/><circle cx="1408.5" cy="420.5" r="1.6" fill="#111"/>
<circle cx="1457.2" cy="417.0" r="2.4" fill="#f7f7f5" stroke="#2b2e31" stroke-width="1.05"/>
<circle cx="1446.8" cy="566.8" r="2.4" fill="#f7f7f5" stroke="#2b2e31" stroke-width="1.05"/>
<circle cx="1420.3" cy="589.8" r="2.4" fill="#f7f7f5" stroke="#2b2e31" stroke-width="1.05"/>
<circle cx="1377.8" cy="620.3" r="3.1" fill="#f7f7f5" stroke="#222" stroke-width="0.9"/><circle cx="1377.8" cy="620.3" r="1.6" fill="#111"/>
<circle cx="1156.0" cy="699.6" r="2.4" fill="#f7f7f5" stroke="#2b2e31" stroke-width="1.05"/>
<circle cx="1081.7" cy="727.2" r="2.4" fill="#f7f7f5" stroke="#2b2e31" stroke-width="1.05"/>
<circle cx="1210.7" cy="766.5" r="2.4" fill="#f7f7f5" stroke="#2b2e31" stroke-width="1.05"/>
<circle cx="1291.3" cy="725.5" r="2.4" fill="#f7f7f5" stroke="#2b2e31" stroke-width="1.05"/>
<circle cx="928.3" cy="793.0" r="2.4" fill="#f7f7f5" stroke="#2b2e31" stroke-width="1.05"/>
<circle cx="960.8" cy="872.4" r="2.4" fill="#f7f7f5" stroke="#2b2e31" stroke-width="1.05"/>
<circle cx="1272.8" cy="858.1" r="2.4" fill="#f7f7f5" stroke="#2b2e31" stroke-width="1.05"/>
<circle cx="1081.5" cy="868.1" r="2.4" fill="#f7f7f5" stroke="#2b2e31" stroke-width="1.05"/>
<circle cx="604.1" cy="411.9" r="2.4" fill="#f7f7f5" stroke="#2b2e31" stroke-width="1.05"/>
<circle cx="662.0" cy="409.6" r="2.4" fill="#f7f7f5" stroke="#2b2e31" stroke-width="1.05"/>
<text x="362.9" y="476.2" textLength="49.0" lengthAdjust="spacing" font-size="11" font-weight="400" fill="none" stroke="#fff" stroke-width="2.6" stroke-linejoin="round" stroke-opacity="0.95">OREGON</text>
<text x="362.9" y="476.2" textLength="49.0" lengthAdjust="spacing" font-size="11" font-weight="400" fill="#4e5358" stroke="#4e5358" stroke-width="0.32">OREGON</text>
<text x="513.8" y="485.4" textLength="37.7" lengthAdjust="spacing" font-size="11" font-weight="400" fill="none" stroke="#fff" stroke-width="2.6" stroke-linejoin="round" stroke-opacity="0.95">IDAHO</text>
<text x="513.8" y="485.4" textLength="37.7" lengthAdjust="spacing" font-size="11" font-weight="400" fill="#4e5358" stroke="#4e5358" stroke-width="0.32">IDAHO</text>
<text x="653.4" y="501.2" textLength="58.7" lengthAdjust="spacing" font-size="11" font-weight="400" fill="none" stroke="#fff" stroke-width="2.6" stroke-linejoin="round" stroke-opacity="0.95">WYOMING</text>
<text x="653.4" y="501.2" textLength="58.7" lengthAdjust="spacing" font-size="11" font-weight="400" fill="#4e5358" stroke="#4e5358" stroke-width="0.32">WYOMING</text>
<text x="447.3" y="598.6" textLength="48.7" lengthAdjust="spacing" font-size="11" font-weight="400" fill="none" stroke="#fff" stroke-width="2.6" stroke-linejoin="round" stroke-opacity="0.95">NEVADA</text>
<text x="447.3" y="598.6" textLength="48.7" lengthAdjust="spacing" font-size="11" font-weight="400" fill="#4e5358" stroke="#4e5358" stroke-width="0.32">NEVADA</text>
<text x="573.5" y="619.0" textLength="31.9" lengthAdjust="spacing" font-size="11" font-weight="400" fill="none" stroke="#fff" stroke-width="2.6" stroke-linejoin="round" stroke-opacity="0.95">UTAH</text>
<text x="573.5" y="619.0" textLength="31.9" lengthAdjust="spacing" font-size="11" font-weight="400" fill="#4e5358" stroke="#4e5358" stroke-width="0.32">UTAH</text>
<text x="698.0" y="630.4" textLength="65.5" lengthAdjust="spacing" font-size="11" font-weight="400" fill="none" stroke="#fff" stroke-width="2.6" stroke-linejoin="round" stroke-opacity="0.95">COLORADO</text>
<text x="698.0" y="630.4" textLength="65.5" lengthAdjust="spacing" font-size="11" font-weight="400" fill="#4e5358" stroke="#4e5358" stroke-width="0.32">COLORADO</text>
<text x="371.8" y="693.6" textLength="72.1" lengthAdjust="spacing" font-size="11" font-weight="400" fill="none" stroke="#fff" stroke-width="2.6" stroke-linejoin="round" stroke-opacity="0.95">CALIFORNIA</text>
<text x="371.8" y="693.6" textLength="72.1" lengthAdjust="spacing" font-size="11" font-weight="400" fill="#4e5358" stroke="#4e5358" stroke-width="0.32">CALIFORNIA</text>
<text x="680.6" y="760.2" textLength="77.2" lengthAdjust="spacing" font-size="11" font-weight="400" fill="none" stroke="#fff" stroke-width="2.6" stroke-linejoin="round" stroke-opacity="0.95">NEW MEXICO</text>
<text x="680.6" y="760.2" textLength="77.2" lengthAdjust="spacing" font-size="11" font-weight="400" fill="#4e5358" stroke="#4e5358" stroke-width="0.32">NEW MEXICO</text>
<text x="493.4" y="842.8" textLength="31.0" lengthAdjust="spacing" font-size="11" font-weight="400" fill="none" stroke="#fff" stroke-width="2.6" stroke-linejoin="round" stroke-opacity="0.95">BAJA</text>
<text x="493.4" y="842.8" textLength="31.0" lengthAdjust="spacing" font-size="11" font-weight="400" fill="#4e5358" stroke="#4e5358" stroke-width="0.32">BAJA</text>
<text x="472.6" y="853.9" textLength="72.0" lengthAdjust="spacing" font-size="11" font-weight="400" fill="none" stroke="#fff" stroke-width="2.6" stroke-linejoin="round" stroke-opacity="0.95">CALIFORNIA</text>
<text x="472.6" y="853.9" textLength="72.0" lengthAdjust="spacing" font-size="11" font-weight="400" fill="#4e5358" stroke="#4e5358" stroke-width="0.32">CALIFORNIA</text>
<text x="596.4" y="863.3" textLength="49.0" lengthAdjust="spacing" font-size="11" font-weight="400" fill="none" stroke="#fff" stroke-width="2.6" stroke-linejoin="round" stroke-opacity="0.95">SONORA</text>
<text x="596.4" y="863.3" textLength="49.0" lengthAdjust="spacing" font-size="11" font-weight="400" fill="#4e5358" stroke="#4e5358" stroke-width="0.32">SONORA</text>
<text x="856.9" y="830.8" textLength="38.1" lengthAdjust="spacing" font-size="11" font-weight="400" fill="none" stroke="#fff" stroke-width="2.6" stroke-linejoin="round" stroke-opacity="0.95">TEXAS</text>
<text x="856.9" y="830.8" textLength="38.1" lengthAdjust="spacing" font-size="11" font-weight="400" fill="#4e5358" stroke="#4e5358" stroke-width="0.32">TEXAS</text>
<text x="828.7" y="448.2" textLength="40.4" lengthAdjust="spacing" font-size="11" font-weight="400" fill="none" stroke="#fff" stroke-width="2.6" stroke-linejoin="round" stroke-opacity="0.95">SOUTH</text>
<text x="828.7" y="448.2" textLength="40.4" lengthAdjust="spacing" font-size="11" font-weight="400" fill="#4e5358" stroke="#4e5358" stroke-width="0.32">SOUTH</text>
<text x="824.9" y="459.4" textLength="48.2" lengthAdjust="spacing" font-size="11" font-weight="400" fill="none" stroke="#fff" stroke-width="2.6" stroke-linejoin="round" stroke-opacity="0.95">DAKOTA</text>
<text x="824.9" y="459.4" textLength="48.2" lengthAdjust="spacing" font-size="11" font-weight="400" fill="#4e5358" stroke="#4e5358" stroke-width="0.32">DAKOTA</text>
<text x="837.4" y="547.4" textLength="63.7" lengthAdjust="spacing" font-size="11" font-weight="400" fill="none" stroke="#fff" stroke-width="2.6" stroke-linejoin="round" stroke-opacity="0.95">NEBRASKA</text>
<text x="837.4" y="547.4" textLength="63.7" lengthAdjust="spacing" font-size="11" font-weight="400" fill="#4e5358" stroke="#4e5358" stroke-width="0.32">NEBRASKA</text>
<text x="868.0" y="636.1" textLength="48.1" lengthAdjust="spacing" font-size="11" font-weight="400" fill="none" stroke="#fff" stroke-width="2.6" stroke-linejoin="round" stroke-opacity="0.95">KANSAS</text>
<text x="868.0" y="636.1" textLength="48.1" lengthAdjust="spacing" font-size="11" font-weight="400" fill="#4e5358" stroke="#4e5358" stroke-width="0.32">KANSAS</text>
<text x="883.3" y="716.1" textLength="67.8" lengthAdjust="spacing" font-size="11" font-weight="400" fill="none" stroke="#fff" stroke-width="2.6" stroke-linejoin="round" stroke-opacity="0.95">OKLAHOMA</text>
<text x="883.3" y="716.1" textLength="67.8" lengthAdjust="spacing" font-size="11" font-weight="400" fill="#4e5358" stroke="#4e5358" stroke-width="0.32">OKLAHOMA</text>
<text x="989.0" y="531.9" textLength="30.2" lengthAdjust="spacing" font-size="11" font-weight="400" fill="none" stroke="#fff" stroke-width="2.6" stroke-linejoin="round" stroke-opacity="0.95">IOWA</text>
<text x="989.0" y="531.9" textLength="30.2" lengthAdjust="spacing" font-size="11" font-weight="400" fill="#4e5358" stroke="#4e5358" stroke-width="0.32">IOWA</text>
<text x="997.5" y="641.8" textLength="58.3" lengthAdjust="spacing" font-size="11" font-weight="400" fill="none" stroke="#fff" stroke-width="2.6" stroke-linejoin="round" stroke-opacity="0.95">MISSOURI</text>
<text x="997.5" y="641.8" textLength="58.3" lengthAdjust="spacing" font-size="11" font-weight="400" fill="#4e5358" stroke="#4e5358" stroke-width="0.32">MISSOURI</text>
<text x="996.6" y="743.7" textLength="64.1" lengthAdjust="spacing" font-size="11" font-weight="400" fill="none" stroke="#fff" stroke-width="2.6" stroke-linejoin="round" stroke-opacity="0.95">ARKANSAS</text>
<text x="996.6" y="743.7" textLength="64.1" lengthAdjust="spacing" font-size="11" font-weight="400" fill="#4e5358" stroke="#4e5358" stroke-width="0.32">ARKANSAS</text>
<text x="1012.9" y="860.4" textLength="64.3" lengthAdjust="spacing" font-size="11" font-weight="400" fill="none" stroke="#fff" stroke-width="2.6" stroke-linejoin="round" stroke-opacity="0.95">LOUISIANA</text>
<text x="1012.9" y="860.4" textLength="64.3" lengthAdjust="spacing" font-size="11" font-weight="400" fill="#4e5358" stroke="#4e5358" stroke-width="0.32">LOUISIANA</text>
<text x="1054.4" y="777.0" textLength="73.2" lengthAdjust="spacing" font-size="11" font-weight="400" fill="none" stroke="#fff" stroke-width="2.6" stroke-linejoin="round" stroke-opacity="0.95">MISSISSIPPI</text>
<text x="1054.4" y="777.0" textLength="73.2" lengthAdjust="spacing" font-size="11" font-weight="400" fill="#4e5358" stroke="#4e5358" stroke-width="0.32">MISSISSIPPI</text>
<text x="1058.4" y="447.5" textLength="68.2" lengthAdjust="spacing" font-size="11" font-weight="400" fill="none" stroke="#fff" stroke-width="2.6" stroke-linejoin="round" stroke-opacity="0.95">WISCONSIN</text>
<text x="1058.4" y="447.5" textLength="68.2" lengthAdjust="spacing" font-size="11" font-weight="400" fill="#4e5358" stroke="#4e5358" stroke-width="0.32">WISCONSIN</text>
<text x="1069.7" y="586.6" textLength="51.2" lengthAdjust="spacing" font-size="11" font-weight="400" fill="none" stroke="#fff" stroke-width="2.6" stroke-linejoin="round" stroke-opacity="0.95">ILLINOIS</text>
<text x="1069.7" y="586.6" textLength="51.2" lengthAdjust="spacing" font-size="11" font-weight="400" fill="#4e5358" stroke="#4e5358" stroke-width="0.32">ILLINOIS</text>
<text x="1173.3" y="476.2" textLength="60.9" lengthAdjust="spacing" font-size="11" font-weight="400" fill="none" stroke="#fff" stroke-width="2.6" stroke-linejoin="round" stroke-opacity="0.95">MICHIGAN</text>
<text x="1173.3" y="476.2" textLength="60.9" lengthAdjust="spacing" font-size="11" font-weight="400" fill="#4e5358" stroke="#4e5358" stroke-width="0.32">MICHIGAN</text>
<text x="1145.8" y="586.6" textLength="50.0" lengthAdjust="spacing" font-size="11" font-weight="400" fill="none" stroke="#fff" stroke-width="2.6" stroke-linejoin="round" stroke-opacity="0.95">INDIANA</text>
<text x="1145.8" y="586.6" textLength="50.0" lengthAdjust="spacing" font-size="11" font-weight="400" fill="#4e5358" stroke="#4e5358" stroke-width="0.32">INDIANA</text>
<text x="1233.0" y="583.1" textLength="28.9" lengthAdjust="spacing" font-size="11" font-weight="400" fill="none" stroke="#fff" stroke-width="2.6" stroke-linejoin="round" stroke-opacity="0.95">OHIO</text>
<text x="1233.0" y="583.1" textLength="28.9" lengthAdjust="spacing" font-size="11" font-weight="400" fill="#4e5358" stroke="#4e5358" stroke-width="0.32">OHIO</text>
<text x="1165.4" y="667.7" textLength="62.7" lengthAdjust="spacing" font-size="11" font-weight="400" fill="none" stroke="#fff" stroke-width="2.6" stroke-linejoin="round" stroke-opacity="0.95">KENTUCKY</text>
<text x="1165.4" y="667.7" textLength="62.7" lengthAdjust="spacing" font-size="11" font-weight="400" fill="#4e5358" stroke="#4e5358" stroke-width="0.32">KENTUCKY</text>
<text x="1124.2" y="716.1" textLength="68.8" lengthAdjust="spacing" font-size="11" font-weight="400" fill="none" stroke="#fff" stroke-width="2.6" stroke-linejoin="round" stroke-opacity="0.95">TENNESSEE</text>
<text x="1124.2" y="716.1" textLength="68.8" lengthAdjust="spacing" font-size="11" font-weight="400" fill="#4e5358" stroke="#4e5358" stroke-width="0.32">TENNESSEE</text>
<text x="1129.6" y="793.5" textLength="57.8" lengthAdjust="spacing" font-size="11" font-weight="400" fill="none" stroke="#fff" stroke-width="2.6" stroke-linejoin="round" stroke-opacity="0.95">ALABAMA</text>
<text x="1129.6" y="793.5" textLength="57.8" lengthAdjust="spacing" font-size="11" font-weight="400" fill="#4e5358" stroke="#4e5358" stroke-width="0.32">ALABAMA</text>
<text x="1210.1" y="801.2" textLength="52.1" lengthAdjust="spacing" font-size="11" font-weight="400" fill="none" stroke="#fff" stroke-width="2.6" stroke-linejoin="round" stroke-opacity="0.95">GEORGIA</text>
<text x="1210.1" y="801.2" textLength="52.1" lengthAdjust="spacing" font-size="11" font-weight="400" fill="#4e5358" stroke="#4e5358" stroke-width="0.32">GEORGIA</text>
<text x="1279.3" y="760.2" textLength="40.4" lengthAdjust="spacing" font-size="11" font-weight="400" fill="none" stroke="#fff" stroke-width="2.6" stroke-linejoin="round" stroke-opacity="0.95">SOUTH</text>
<text x="1279.3" y="760.2" textLength="40.4" lengthAdjust="spacing" font-size="11" font-weight="400" fill="#4e5358" stroke="#4e5358" stroke-width="0.32">SOUTH</text>
<text x="1269.9" y="771.3" textLength="60.4" lengthAdjust="spacing" font-size="11" font-weight="400" fill="none" stroke="#fff" stroke-width="2.6" stroke-linejoin="round" stroke-opacity="0.95">CAROLINA</text>
<text x="1269.9" y="771.3" textLength="60.4" lengthAdjust="spacing" font-size="11" font-weight="400" fill="#4e5358" stroke="#4e5358" stroke-width="0.32">CAROLINA</text>
<text x="1312.6" y="713.0" textLength="41.3" lengthAdjust="spacing" font-size="11" font-weight="400" fill="none" stroke="#fff" stroke-width="2.6" stroke-linejoin="round" stroke-opacity="0.95">NORTH</text>
<text x="1312.6" y="713.0" textLength="41.3" lengthAdjust="spacing" font-size="11" font-weight="400" fill="#4e5358" stroke="#4e5358" stroke-width="0.32">NORTH</text>
<text x="1303.5" y="724.2" textLength="60.7" lengthAdjust="spacing" font-size="11" font-weight="400" fill="none" stroke="#fff" stroke-width="2.6" stroke-linejoin="round" stroke-opacity="0.95">CAROLINA</text>
<text x="1303.5" y="724.2" textLength="60.7" lengthAdjust="spacing" font-size="11" font-weight="400" fill="#4e5358" stroke="#4e5358" stroke-width="0.32">CAROLINA</text>
<text x="1312.6" y="667.4" textLength="52.5" lengthAdjust="spacing" font-size="11" font-weight="400" fill="none" stroke="#fff" stroke-width="2.6" stroke-linejoin="round" stroke-opacity="0.95">VIRGINIA</text>
<text x="1312.6" y="667.4" textLength="52.5" lengthAdjust="spacing" font-size="11" font-weight="400" fill="#4e5358" stroke="#4e5358" stroke-width="0.32">VIRGINIA</text>
<text x="1271.9" y="630.5" textLength="32.1" lengthAdjust="spacing" font-size="11" font-weight="400" fill="none" stroke="#fff" stroke-width="2.6" stroke-linejoin="round" stroke-opacity="0.95">WEST</text>
<text x="1271.9" y="630.5" textLength="32.1" lengthAdjust="spacing" font-size="11" font-weight="400" fill="#4e5358" stroke="#4e5358" stroke-width="0.32">WEST</text>
<text x="1261.9" y="641.8" textLength="53.5" lengthAdjust="spacing" font-size="11" font-weight="400" fill="none" stroke="#fff" stroke-width="2.6" stroke-linejoin="round" stroke-opacity="0.95">VIRGINIA</text>
<text x="1261.9" y="641.8" textLength="53.5" lengthAdjust="spacing" font-size="11" font-weight="400" fill="#4e5358" stroke="#4e5358" stroke-width="0.32">VIRGINIA</text>
<text x="1316.9" y="566.8" textLength="92.4" lengthAdjust="spacing" font-size="11" font-weight="400" fill="none" stroke="#fff" stroke-width="2.6" stroke-linejoin="round" stroke-opacity="0.95">PENNSYLVANIA</text>
<text x="1316.9" y="566.8" textLength="92.4" lengthAdjust="spacing" font-size="11" font-weight="400" fill="#4e5358" stroke="#4e5358" stroke-width="0.32">PENNSYLVANIA</text>
<text x="1370.6" y="504.4" textLength="62.4" lengthAdjust="spacing" font-size="11" font-weight="400" fill="none" stroke="#fff" stroke-width="2.6" stroke-linejoin="round" stroke-opacity="0.95">NEW YORK</text>
<text x="1370.6" y="504.4" textLength="62.4" lengthAdjust="spacing" font-size="11" font-weight="400" fill="#4e5358" stroke="#4e5358" stroke-width="0.32">NEW YORK</text>
<text x="1345.6" y="606.8" textLength="66.2" lengthAdjust="spacing" font-size="11" font-weight="400" fill="none" stroke="#fff" stroke-width="2.6" stroke-linejoin="round" stroke-opacity="0.95">MARYLAND</text>
<text x="1345.6" y="606.8" textLength="66.2" lengthAdjust="spacing" font-size="11" font-weight="400" fill="#4e5358" stroke="#4e5358" stroke-width="0.32">MARYLAND</text>
<text x="1408.5" y="621.8" textLength="14.5" lengthAdjust="spacing" font-size="11" font-weight="400" fill="none" stroke="#fff" stroke-width="2.6" stroke-linejoin="round" stroke-opacity="0.95">DE</text>
<text x="1408.5" y="621.8" textLength="14.5" lengthAdjust="spacing" font-size="11" font-weight="400" fill="#4e5358" stroke="#4e5358" stroke-width="0.32">DE</text>
<text x="1426.8" y="599.3" textLength="14.7" lengthAdjust="spacing" font-size="11" font-weight="400" fill="none" stroke="#fff" stroke-width="2.6" stroke-linejoin="round" stroke-opacity="0.95">NJ</text>
<text x="1426.8" y="599.3" textLength="14.7" lengthAdjust="spacing" font-size="11" font-weight="400" fill="#4e5358" stroke="#4e5358" stroke-width="0.32">NJ</text>
<text x="1467.7" y="544.9" textLength="14.5" lengthAdjust="spacing" font-size="11" font-weight="400" fill="none" stroke="#fff" stroke-width="2.6" stroke-linejoin="round" stroke-opacity="0.95">CT</text>
<text x="1467.7" y="544.9" textLength="14.5" lengthAdjust="spacing" font-size="11" font-weight="400" fill="#4e5358" stroke="#4e5358" stroke-width="0.32">CT</text>
<text x="1506.7" y="548.1" textLength="11.0" lengthAdjust="spacing" font-size="11" font-weight="400" fill="none" stroke="#fff" stroke-width="2.6" stroke-linejoin="round" stroke-opacity="0.95">RI</text>
<text x="1506.7" y="548.1" textLength="11.0" lengthAdjust="spacing" font-size="11" font-weight="400" fill="#4e5358" stroke="#4e5358" stroke-width="0.32">RI</text>
<text x="1451.5" y="519.1" textLength="105.6" lengthAdjust="spacing" font-size="11" font-weight="400" fill="none" stroke="#fff" stroke-width="2.6" stroke-linejoin="round" stroke-opacity="0.95">MASSACHUSETTS</text>
<text x="1451.5" y="519.1" textLength="105.6" lengthAdjust="spacing" font-size="11" font-weight="400" fill="#4e5358" stroke="#4e5358" stroke-width="0.32">MASSACHUSETTS</text>
<text x="1489.0" y="483.2" textLength="25.7" lengthAdjust="spacing" font-size="11" font-weight="400" fill="none" stroke="#fff" stroke-width="2.6" stroke-linejoin="round" stroke-opacity="0.95">NEW</text>
<text x="1489.0" y="483.2" textLength="25.7" lengthAdjust="spacing" font-size="11" font-weight="400" fill="#4e5358" stroke="#4e5358" stroke-width="0.32">NEW</text>
<text x="1466.5" y="494.4" textLength="71.2" lengthAdjust="spacing" font-size="11" font-weight="400" fill="none" stroke="#fff" stroke-width="2.6" stroke-linejoin="round" stroke-opacity="0.95">HAMPSHIRE</text>
<text x="1466.5" y="494.4" textLength="71.2" lengthAdjust="spacing" font-size="11" font-weight="400" fill="#4e5358" stroke="#4e5358" stroke-width="0.32">HAMPSHIRE</text>
<text x="1448.0" y="457.4" textLength="57.9" lengthAdjust="spacing" font-size="11" font-weight="400" fill="none" stroke="#fff" stroke-width="2.6" stroke-linejoin="round" stroke-opacity="0.95">VERMONT</text>
<text x="1448.0" y="457.4" textLength="57.9" lengthAdjust="spacing" font-size="11" font-weight="400" fill="#4e5358" stroke="#4e5358" stroke-width="0.32">VERMONT</text>
<text x="1539.7" y="438.2" textLength="38.7" lengthAdjust="spacing" font-size="11" font-weight="400" fill="none" stroke="#fff" stroke-width="2.6" stroke-linejoin="round" stroke-opacity="0.95">MAINE</text>
<text x="1539.7" y="438.2" textLength="38.7" lengthAdjust="spacing" font-size="11" font-weight="400" fill="#4e5358" stroke="#4e5358" stroke-width="0.32">MAINE</text>
<text x="1645.7" y="447.5" textLength="81.7" lengthAdjust="spacing" font-size="11" font-weight="400" fill="none" stroke="#fff" stroke-width="2.6" stroke-linejoin="round" stroke-opacity="0.95">NOVA SCOTIA</text>
<text x="1645.7" y="447.5" textLength="81.7" lengthAdjust="spacing" font-size="11" font-weight="400" fill="#4e5358" stroke="#4e5358" stroke-width="0.32">NOVA SCOTIA</text>
<text x="1682.5" y="416.2" textLength="43.2" lengthAdjust="spacing" font-size="11" font-weight="400" fill="none" stroke="#fff" stroke-width="2.6" stroke-linejoin="round" stroke-opacity="0.95">ISLAND</text>
<text x="1682.5" y="416.2" textLength="43.2" lengthAdjust="spacing" font-size="11" font-weight="400" fill="#4e5358" stroke="#4e5358" stroke-width="0.32">ISLAND</text>
<text x="473.6" y="472.9" textLength="26.7" lengthAdjust="spacing" font-size="11" font-weight="400" fill="none" stroke="#fff" stroke-width="2.8" stroke-linejoin="round" stroke-opacity="0.95">Boise</text>
<text x="473.6" y="472.9" textLength="26.7" lengthAdjust="spacing" font-size="11" font-weight="400" fill="#26292c" stroke="#26292c" stroke-width="0.25">Boise</text>
<text x="551.0" y="560.6" textLength="66.7" lengthAdjust="spacing" font-size="11" font-weight="400" fill="none" stroke="#fff" stroke-width="2.8" stroke-linejoin="round" stroke-opacity="0.95">Salt Lake City</text>
<text x="551.0" y="560.6" textLength="66.7" lengthAdjust="spacing" font-size="11" font-weight="400" fill="#26292c" stroke="#26292c" stroke-width="0.25">Salt Lake City</text>
<text x="930.6" y="544.9" textLength="34.9" lengthAdjust="spacing" font-size="11" font-weight="400" fill="none" stroke="#fff" stroke-width="2.8" stroke-linejoin="round" stroke-opacity="0.95">Omaha</text>
<text x="930.6" y="544.9" textLength="34.9" lengthAdjust="spacing" font-size="11" font-weight="400" fill="#26292c" stroke="#26292c" stroke-width="0.25">Omaha</text>
<text x="1059.3" y="721.8" textLength="44.9" lengthAdjust="spacing" font-size="11" font-weight="400" fill="none" stroke="#fff" stroke-width="2.8" stroke-linejoin="round" stroke-opacity="0.95">Memphis</text>
<text x="1059.3" y="721.8" textLength="44.9" lengthAdjust="spacing" font-size="11" font-weight="400" fill="#26292c" stroke="#26292c" stroke-width="0.25">Memphis</text>
<text x="312.5" y="410.7" textLength="52.5" lengthAdjust="spacing" font-size="14" font-weight="400" fill="none" stroke="#fff" stroke-width="3.0" stroke-linejoin="round" stroke-opacity="0.95">Portland</text>
<text x="312.5" y="410.7" textLength="52.5" lengthAdjust="spacing" font-size="14" font-weight="400" fill="#222528" stroke="#222528" stroke-width="0.35">Portland</text>
<text x="328.7" y="624.2" textLength="75.4" lengthAdjust="spacing" font-size="14" font-weight="400" fill="none" stroke="#fff" stroke-width="3.0" stroke-linejoin="round" stroke-opacity="0.95">Sacramento</text>
<text x="328.7" y="624.2" textLength="75.4" lengthAdjust="spacing" font-size="14" font-weight="400" fill="#222528" stroke="#222528" stroke-width="0.35">Sacramento</text>
<text x="301.0" y="647.5" textLength="88.2" lengthAdjust="spacing" font-size="14" font-weight="400" fill="none" stroke="#fff" stroke-width="3.0" stroke-linejoin="round" stroke-opacity="0.95">San Francisco</text>
<text x="301.0" y="647.5" textLength="88.2" lengthAdjust="spacing" font-size="14" font-weight="400" fill="#222528" stroke="#222528" stroke-width="0.35">San Francisco</text>
<text x="362.2" y="671.1" textLength="56.9" lengthAdjust="spacing" font-size="14" font-weight="400" fill="none" stroke="#fff" stroke-width="3.0" stroke-linejoin="round" stroke-opacity="0.95">San Jose</text>
<text x="362.2" y="671.1" textLength="56.9" lengthAdjust="spacing" font-size="14" font-weight="400" fill="#222528" stroke="#222528" stroke-width="0.35">San Jose</text>
<text x="402.3" y="752.2" textLength="76.9" lengthAdjust="spacing" font-size="14" font-weight="400" fill="none" stroke="#fff" stroke-width="3.0" stroke-linejoin="round" stroke-opacity="0.95">Los Angeles</text>
<text x="402.3" y="752.2" textLength="76.9" lengthAdjust="spacing" font-size="14" font-weight="400" fill="#222528" stroke="#222528" stroke-width="0.35">Los Angeles</text>
<text x="432.8" y="788.7" textLength="63.4" lengthAdjust="spacing" font-size="14" font-weight="400" fill="none" stroke="#fff" stroke-width="3.0" stroke-linejoin="round" stroke-opacity="0.95">San Diego</text>
<text x="432.8" y="788.7" textLength="63.4" lengthAdjust="spacing" font-size="14" font-weight="400" fill="#222528" stroke="#222528" stroke-width="0.35">San Diego</text>
<text x="479.1" y="693.0" textLength="64.1" lengthAdjust="spacing" font-size="14" font-weight="400" fill="none" stroke="#fff" stroke-width="3.0" stroke-linejoin="round" stroke-opacity="0.95">Las Vegas</text>
<text x="479.1" y="693.0" textLength="64.1" lengthAdjust="spacing" font-size="14" font-weight="400" fill="#222528" stroke="#222528" stroke-width="0.35">Las Vegas</text>
<text x="556.0" y="790.1" textLength="49.5" lengthAdjust="spacing" font-size="14" font-weight="400" fill="none" stroke="#fff" stroke-width="3.0" stroke-linejoin="round" stroke-opacity="0.95">Phoenix</text>
<text x="556.0" y="790.1" textLength="49.5" lengthAdjust="spacing" font-size="14" font-weight="400" fill="#222528" stroke="#222528" stroke-width="0.35">Phoenix</text>
<text x="583.6" y="822.8" textLength="45.0" lengthAdjust="spacing" font-size="14" font-weight="400" fill="none" stroke="#fff" stroke-width="3.0" stroke-linejoin="round" stroke-opacity="0.95">Tucson</text>
<text x="583.6" y="822.8" textLength="45.0" lengthAdjust="spacing" font-size="14" font-weight="400" fill="#222528" stroke="#222528" stroke-width="0.35">Tucson</text>
<text x="664.7" y="723.2" textLength="78.9" lengthAdjust="spacing" font-size="14" font-weight="400" fill="none" stroke="#fff" stroke-width="3.0" stroke-linejoin="round" stroke-opacity="0.95">Albuquerque</text>
<text x="664.7" y="723.2" textLength="78.9" lengthAdjust="spacing" font-size="14" font-weight="400" fill="#222528" stroke="#222528" stroke-width="0.35">Albuquerque</text>
<text x="664.7" y="837.6" textLength="89.1" lengthAdjust="spacing" font-size="14" font-weight="400" fill="none" stroke="#fff" stroke-width="3.0" stroke-linejoin="round" stroke-opacity="0.95">Ciudad Juárez</text>
<text x="664.7" y="837.6" textLength="89.1" lengthAdjust="spacing" font-size="14" font-weight="400" fill="#222528" stroke="#222528" stroke-width="0.35">Ciudad Juárez</text>
<text x="694.6" y="601.0" textLength="42.9" lengthAdjust="spacing" font-size="14" font-weight="400" fill="none" stroke="#fff" stroke-width="3.0" stroke-linejoin="round" stroke-opacity="0.95">Denver</text>
<text x="694.6" y="601.0" textLength="42.9" lengthAdjust="spacing" font-size="14" font-weight="400" fill="#222528" stroke="#222528" stroke-width="0.35">Denver</text>
<text x="971.0" y="428.2" textLength="76.2" lengthAdjust="spacing" font-size="14" font-weight="400" fill="none" stroke="#fff" stroke-width="3.0" stroke-linejoin="round" stroke-opacity="0.95">Minneapolis</text>
<text x="971.0" y="428.2" textLength="76.2" lengthAdjust="spacing" font-size="14" font-weight="400" fill="#222528" stroke="#222528" stroke-width="0.35">Minneapolis</text>
<text x="1111.6" y="525.4" textLength="51.0" lengthAdjust="spacing" font-size="14" font-weight="400" fill="none" stroke="#fff" stroke-width="3.0" stroke-linejoin="round" stroke-opacity="0.95">Chicago</text>
<text x="1111.6" y="525.4" textLength="51.0" lengthAdjust="spacing" font-size="14" font-weight="400" fill="#222528" stroke="#222528" stroke-width="0.35">Chicago</text>
<text x="942.8" y="608.5" textLength="73.2" lengthAdjust="spacing" font-size="14" font-weight="400" fill="none" stroke="#fff" stroke-width="3.0" stroke-linejoin="round" stroke-opacity="0.95">Kansas City</text>
<text x="942.8" y="608.5" textLength="73.2" lengthAdjust="spacing" font-size="14" font-weight="400" fill="#222528" stroke="#222528" stroke-width="0.35">Kansas City</text>
<text x="1019.7" y="622.3" textLength="54.2" lengthAdjust="spacing" font-size="14" font-weight="400" fill="none" stroke="#fff" stroke-width="3.0" stroke-linejoin="round" stroke-opacity="0.95">St. Louis</text>
<text x="1019.7" y="622.3" textLength="54.2" lengthAdjust="spacing" font-size="14" font-weight="400" fill="#222528" stroke="#222528" stroke-width="0.35">St. Louis</text>
<text x="1090.4" y="610.3" textLength="75.9" lengthAdjust="spacing" font-size="14" font-weight="400" fill="none" stroke="#fff" stroke-width="3.0" stroke-linejoin="round" stroke-opacity="0.95">Indianapolis</text>
<text x="1090.4" y="610.3" textLength="75.9" lengthAdjust="spacing" font-size="14" font-weight="400" fill="#222528" stroke="#222528" stroke-width="0.35">Indianapolis</text>
<text x="1177.1" y="608.5" textLength="62.1" lengthAdjust="spacing" font-size="14" font-weight="400" fill="none" stroke="#fff" stroke-width="3.0" stroke-linejoin="round" stroke-opacity="0.95">Cincinnati</text>
<text x="1177.1" y="608.5" textLength="62.1" lengthAdjust="spacing" font-size="14" font-weight="400" fill="#222528" stroke="#222528" stroke-width="0.35">Cincinnati</text>
<text x="1271.2" y="470.4" textLength="48.7" lengthAdjust="spacing" font-size="14" font-weight="400" fill="none" stroke="#fff" stroke-width="3.0" stroke-linejoin="round" stroke-opacity="0.95">Toronto</text>
<text x="1271.2" y="470.4" textLength="48.7" lengthAdjust="spacing" font-size="14" font-weight="400" fill="#222528" stroke="#222528" stroke-width="0.35">Toronto</text>
<text x="1386.6" y="436.7" textLength="43.2" lengthAdjust="spacing" font-size="14" font-weight="400" fill="none" stroke="#fff" stroke-width="3.0" stroke-linejoin="round" stroke-opacity="0.95">Ottawa</text>
<text x="1386.6" y="436.7" textLength="43.2" lengthAdjust="spacing" font-size="14" font-weight="400" fill="#222528" stroke="#222528" stroke-width="0.35">Ottawa</text>
<text x="1431.0" y="411.0" textLength="53.7" lengthAdjust="spacing" font-size="14" font-weight="400" fill="none" stroke="#fff" stroke-width="3.0" stroke-linejoin="round" stroke-opacity="0.95">Montreal</text>
<text x="1431.0" y="411.0" textLength="53.7" lengthAdjust="spacing" font-size="14" font-weight="400" fill="#222528" stroke="#222528" stroke-width="0.35">Montreal</text>
<text x="1417.8" y="560.6" textLength="58.9" lengthAdjust="spacing" font-size="14" font-weight="400" fill="none" stroke="#fff" stroke-width="3.0" stroke-linejoin="round" stroke-opacity="0.95">New York</text>
<text x="1417.8" y="560.6" textLength="58.9" lengthAdjust="spacing" font-size="14" font-weight="400" fill="#222528" stroke="#222528" stroke-width="0.35">New York</text>
<text x="1339.9" y="583.1" textLength="76.6" lengthAdjust="spacing" font-size="14" font-weight="400" fill="none" stroke="#fff" stroke-width="3.0" stroke-linejoin="round" stroke-opacity="0.95">Philadelphia</text>
<text x="1339.9" y="583.1" textLength="76.6" lengthAdjust="spacing" font-size="14" font-weight="400" fill="#222528" stroke="#222528" stroke-width="0.35">Philadelphia</text>
<text x="1340.6" y="636.4" textLength="74.6" lengthAdjust="spacing" font-size="14" font-weight="400" fill="none" stroke="#fff" stroke-width="3.0" stroke-linejoin="round" stroke-opacity="0.95">Washington</text>
<text x="1340.6" y="636.4" textLength="74.6" lengthAdjust="spacing" font-size="14" font-weight="400" fill="#222528" stroke="#222528" stroke-width="0.35">Washington</text>
<text x="1128.1" y="693.0" textLength="57.0" lengthAdjust="spacing" font-size="14" font-weight="400" fill="none" stroke="#fff" stroke-width="3.0" stroke-linejoin="round" stroke-opacity="0.95">Nashville</text>
<text x="1128.1" y="693.0" textLength="57.0" lengthAdjust="spacing" font-size="14" font-weight="400" fill="#222528" stroke="#222528" stroke-width="0.35">Nashville</text>
<text x="1188.8" y="760.2" textLength="43.5" lengthAdjust="spacing" font-size="14" font-weight="400" fill="none" stroke="#fff" stroke-width="3.0" stroke-linejoin="round" stroke-opacity="0.95">Atlanta</text>
<text x="1188.8" y="760.2" textLength="43.5" lengthAdjust="spacing" font-size="14" font-weight="400" fill="#222528" stroke="#222528" stroke-width="0.35">Atlanta</text>
<text x="1262.8" y="740.9" textLength="58.2" lengthAdjust="spacing" font-size="14" font-weight="400" fill="none" stroke="#fff" stroke-width="3.0" stroke-linejoin="round" stroke-opacity="0.95">Charlotte</text>
<text x="1262.8" y="740.9" textLength="58.2" lengthAdjust="spacing" font-size="14" font-weight="400" fill="#222528" stroke="#222528" stroke-width="0.35">Charlotte</text>
<text x="909.5" y="787.0" textLength="37.9" lengthAdjust="spacing" font-size="14" font-weight="400" fill="none" stroke="#fff" stroke-width="3.0" stroke-linejoin="round" stroke-opacity="0.95">Dallas</text>
<text x="909.5" y="787.0" textLength="37.9" lengthAdjust="spacing" font-size="14" font-weight="400" fill="#222528" stroke="#222528" stroke-width="0.35">Dallas</text>
<text x="934.6" y="866.7" textLength="52.6" lengthAdjust="spacing" font-size="14" font-weight="400" fill="none" stroke="#fff" stroke-width="3.0" stroke-linejoin="round" stroke-opacity="0.95">Houston</text>
<text x="934.6" y="866.7" textLength="52.6" lengthAdjust="spacing" font-size="14" font-weight="400" fill="#222528" stroke="#222528" stroke-width="0.35">Houston</text>
<text x="851.9" y="875.6" textLength="75.6" lengthAdjust="spacing" font-size="14" font-weight="400" fill="none" stroke="#fff" stroke-width="3.0" stroke-linejoin="round" stroke-opacity="0.95">San Antonio</text>
<text x="851.9" y="875.6" textLength="75.6" lengthAdjust="spacing" font-size="14" font-weight="400" fill="#222528" stroke="#222528" stroke-width="0.35">San Antonio</text>
<text x="1235.2" y="851.9" textLength="76.8" lengthAdjust="spacing" font-size="14" font-weight="400" fill="none" stroke="#fff" stroke-width="3.0" stroke-linejoin="round" stroke-opacity="0.95">Jacksonville</text>
<text x="1235.2" y="851.9" textLength="76.8" lengthAdjust="spacing" font-size="14" font-weight="400" fill="#222528" stroke="#222528" stroke-width="0.35">Jacksonville</text>
<text x="1043.5" y="882.3" textLength="76.0" lengthAdjust="spacing" font-size="14" font-weight="400" fill="none" stroke="#fff" stroke-width="3.0" stroke-linejoin="round" stroke-opacity="0.95">New Orleans</text>
<text x="1043.5" y="882.3" textLength="76.0" lengthAdjust="spacing" font-size="14" font-weight="400" fill="#222528" stroke="#222528" stroke-width="0.35">New Orleans</text>
<text x="1629.4" y="810.3" textLength="57.5" lengthAdjust="spacing" font-size="14" font-weight="700" fill="none" stroke="#fff" stroke-width="3.0" stroke-linejoin="round" stroke-opacity="0.95">Bermuda</text>
<text x="1629.4" y="810.3" textLength="57.5" lengthAdjust="spacing" font-size="14" font-weight="700" fill="#202124" stroke="#202124" stroke-width="0">Bermuda</text>
<text x="763.2" y="601.0" textLength="120.4" lengthAdjust="spacing" font-size="18" font-weight="700" fill="none" stroke="#fff" stroke-width="3.2" stroke-linejoin="round" stroke-opacity="0.95">United States</text>
<text x="763.2" y="601.0" textLength="120.4" lengthAdjust="spacing" font-size="18" font-weight="700" fill="#1d1f21" stroke="#1d1f21" stroke-width="0">United States</text>
<circle cx="748.7" cy="592.8" r="8.0" fill="#dce8a4" fill-opacity="0.45" stroke="#bcd64f" stroke-width="1.9"/>
<circle cx="346.0" cy="657.7" r="8.0" fill="#dce8a4" fill-opacity="0.45" stroke="#bcd64f" stroke-width="1.9"/>
<circle cx="580.5" cy="774.5" r="8.0" fill="#dce8a4" fill-opacity="0.45" stroke="#bcd64f" stroke-width="1.9"/>
<circle cx="1505.2" cy="510.4" r="8.0" fill="#dce8a4" fill-opacity="0.45" stroke="#bcd64f" stroke-width="1.9"/>
<circle cx="1210.1" cy="769.3" r="8.0" fill="#dba0a3" fill-opacity="0.45" stroke="#b5353c" stroke-width="1.9"/>
<defs><filter id="sh" x="-20%" y="-20%" width="140%" height="150%"><feDropShadow dx="0" dy="1" stdDeviation="1.2" flood-color="#000" flood-opacity="0.3"/></filter></defs>
<rect x="47" y="420" width="40" height="81" rx="2" fill="#fff" filter="url(#sh)"/>
<path d="M58.5 440h17M67 431.5v17M58.5 481h17" stroke="#616161" stroke-width="2.1" fill="none"/>
<rect x="52" y="460" width="30" height="1" fill="#e6e6e6"/>
<rect x="1764" y="420" width="40" height="40" rx="2" fill="#fff" filter="url(#sh)"/>
<path d="M1776 437v-5h5M1787 432h5v5M1792 443v5h-5M1781 448h-5v-5" stroke="#555" stroke-width="2.1" fill="none"/>
<circle cx="1784" cy="757.8" r="20" fill="#fff" filter="url(#sh)"/>
<path d="M1780.500 750.500l3.500-3.500 3.500 3.500M1780.500 765.100l3.500 3.500 3.500-3.500M1776.700 754.300l-3.500 3.500 3.500 3.500M1791.300 754.300l3.500 3.500-3.500 3.500" stroke="#666" stroke-width="2.200" fill="none"/>
<rect x="1764" y="810" width="40" height="40" rx="2" fill="#fff" filter="url(#sh)"/>
<g stroke="#d59a1c" stroke-width="0.7" fill="#f6b92b"><path d="M1779.2 826.500c-1.600 0.300-2.300 1.300-2.600 3l-1.300 7.200c-.2 1 .2 1.500 .9 1.600.7 .1 1.200-.3 1.400-1.200l1-4.600.2 0 0 11.600c0 .8 .6 1.400 1.400 1.400h1.700v-7.500h1.400v7.500h1.700c.8 0 1.400-.6 1.400-1.400l0-11.600 .2 0 1 4.600c.2 .9 .7 1.300 1.400 1.200 .7-.1 1.100-.6 .9-1.600l-1.300-7.200c-.3-1.700-1-2.700-2.600-3z"/><circle cx="1783.400" cy="820.300" r="5.300"/></g>
<path d="M1780 826.600l3.400 5.200 3.400-5.200z" fill="#e3851f"/>
<path d="M1783.3 779.200Q1783.300 776.300 1785.550 776.300Q1787.800 776.300 1787.800 779.200V784.600Q1789.600 783.300 1791.500 785.600Q1793.400 784.600 1795.500 786.700Q1799.900 786 1799.900 790.500V797Q1799.900 807.300 1790.500 807.300Q1786.500 807.300 1783.500 803.800L1775.800 795.200Q1774.400 793.300 1776.500 792.300Q1779.500 791.200 1783.300 795.600Z" fill="#fff" stroke="#1b1f33" stroke-width="1.25" stroke-linejoin="round"/>
<path d="M1787.600 784.600V791M1791.500 785.800V791M1795.500 786.800V791.300" stroke="#1b1f33" stroke-width="1.15" fill="none"/>
<rect x="47" y="754" width="65" height="110" rx="3" fill="#fff" fill-opacity="0.5"/>
<clipPath id="lg"><rect x="57" y="759" width="10" height="100" rx="3.500"/></clipPath>
<g clip-path="url(#lg)"><rect x="57" y="759" width="10" height="20" fill="#c0666b"/><rect x="57" y="779" width="10" height="20" fill="#e09a74"/><rect x="57" y="799" width="10" height="20" fill="#f2c27c"/><rect x="57" y="819" width="10" height="20" fill="#f5de85"/><rect x="57" y="839" width="10" height="20" fill="#cbdf8f"/></g>
<text x="72.700" y="772.800" font-size="12" fill="#3a4245" textLength="18.900" lengthAdjust="spacingAndGlyphs">190</text>
<text x="72.400" y="852.800" font-size="12" fill="#3a4245">1</text>
<text x="47.200" y="867.200" font-size="19.500" textLength="55.500" lengthAdjust="spacingAndGlyphs" letter-spacing="-0.3" fill="none" stroke="#7d8486" stroke-width="2.600" stroke-linejoin="round" stroke-opacity="0.8">Google</text>
<text x="47.200" y="867.200" font-size="19.500" textLength="55.500" lengthAdjust="spacingAndGlyphs" letter-spacing="-0.3" fill="#fff" stroke="#fff" stroke-width="0.600" stroke-linejoin="round">Google</text>
<rect x="1427" y="860" width="387" height="14" fill="#f5f5f5" fill-opacity="0.72"/>
<rect x="1525.2" y="860" width="1" height="14" fill="#dfe3e4"/>
<rect x="1675.6" y="860" width="1" height="14" fill="#dfe3e4"/>
<rect x="1774.4" y="860" width="1" height="14" fill="#dfe3e4"/>
<text x="1432.600" y="869.700" textLength="86" font-size="10" fill="#1f2123" lengthAdjust="spacing">Keyboard shortcuts</text>
<text x="1531.200" y="869.700" textLength="137.600" font-size="10" fill="#1f2123" lengthAdjust="spacing">Map data ©2025 Google, INEGI</text>
<text x="1681.800" y="869.700" textLength="32.500" font-size="10" fill="#1f2123" lengthAdjust="spacing">200 km</text>
<text x="1780.300" y="869.700" textLength="27.600" font-size="10" fill="#1f2123" lengthAdjust="spacing">Terms</text>
<path d="M1718.900 864.500v4.300h47.200v-4.300" stroke="#1f2123" stroke-width="1.800" fill="none"/>
<rect x="530.900" y="698.200" width="98.800" height="71.700" rx="4" fill="#3b4347"/>
<path d="M576 769.500h9l-4.500 4z" fill="#3b4347"/>
<text x="539.500" y="717.200" textLength="54.900" font-size="12" fill="#fff" stroke="#fff" stroke-width="0.25" lengthAdjust="spacing">Site Name</text>
<text x="539.500" y="730.900" textLength="82" font-size="12" fill="#fff" stroke="#fff" stroke-width="0.25" lengthAdjust="spacing">sdwan_phoenix</text>
<text x="539.500" y="744.800" textLength="31.300" font-size="12" fill="#fff" stroke="#fff" stroke-width="0.25" lengthAdjust="spacing">Count</text>
<text x="539.500" y="758.800" textLength="13.400" font-size="12" fill="#fff" stroke="#fff" stroke-width="0.25" lengthAdjust="spacing">23</text>
</svg>
</div>
</div>

</div></div>
</body>
</html>
